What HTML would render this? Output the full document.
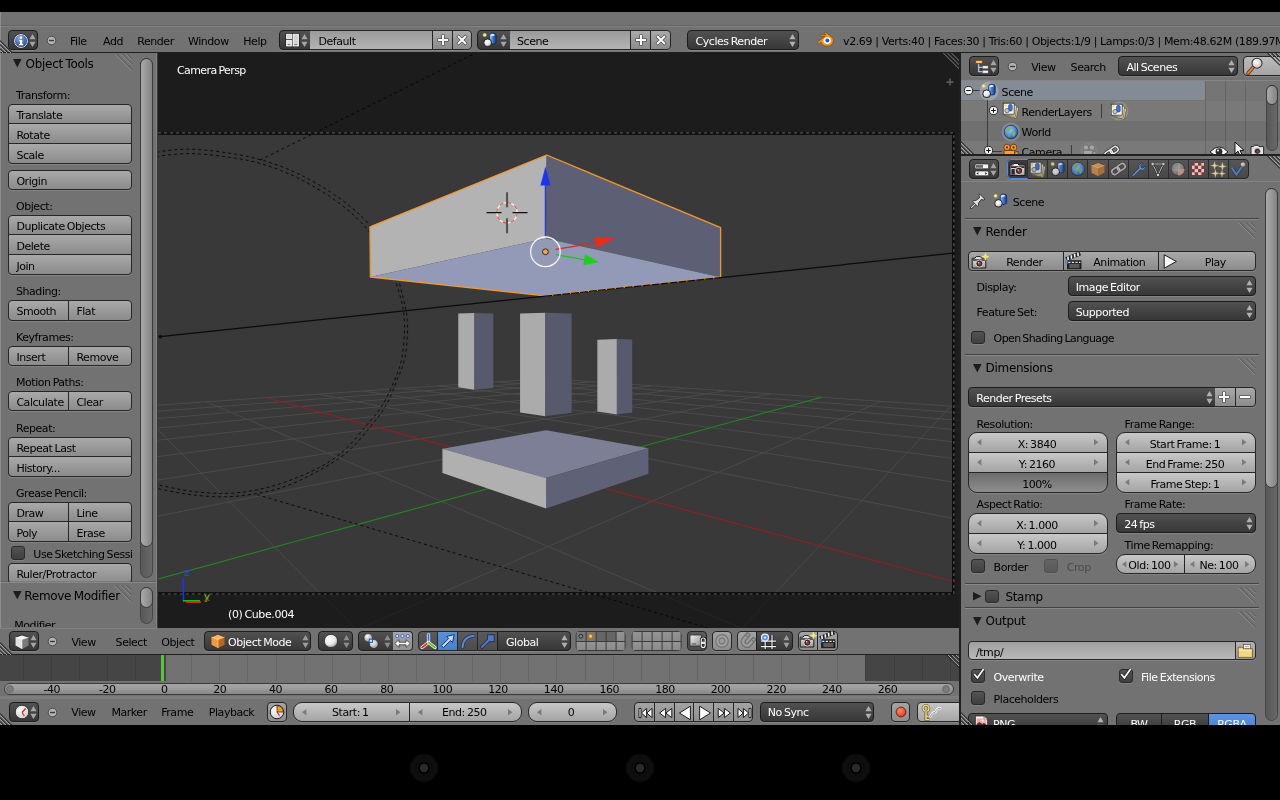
<!DOCTYPE html>
<html lang="en"><head><meta charset="utf-8"><title>Blender</title>
<style>
*{box-sizing:border-box;margin:0;padding:0}
html,body{width:1280px;height:800px;overflow:hidden;background:#000}
body{font-family:"DejaVu Sans","Liberation Sans",sans-serif;font-size:11px;letter-spacing:-0.45px;color:#000;position:relative;line-height:1;font-variant-ligatures:none}
#root{position:absolute;left:0;top:0;width:1280px;height:800px;overflow:hidden;filter:blur(.35px)}
.a{position:absolute}
.bg{background:#727272}
.t{position:absolute;white-space:nowrap;line-height:13px;height:13px;word-spacing:-1px;transform:translateY(.4px)}
.w{color:#fff}
.pt{position:absolute;white-space:nowrap;font-size:12px;line-height:14px;letter-spacing:-0.3px;word-spacing:-1px;transform:translateY(.4px)}
/* widgets */
.btn{position:absolute;height:20px;border:1px solid #262626;background:linear-gradient(#a9a9a9,#8b8b8b);box-shadow:0 1px 0 rgba(255,255,255,.13)}
.menu{position:absolute;height:20px;border:1px solid #1c1c1c;background:linear-gradient(#515151,#373737);border-radius:4px;box-shadow:0 1px 0 rgba(255,255,255,.13);color:#fff}
.num{position:absolute;height:20px;border:1px solid #262626;background:linear-gradient(#c8c8c8,#a4a4a4);box-shadow:0 1px 0 rgba(255,255,255,.13)}
.txt{position:absolute;height:20px;border:1px solid #262626;background:linear-gradient(#9a9a9a,#b4b4b4);box-shadow:0 1px 0 rgba(255,255,255,.13)}
.sld{position:absolute;height:20px;border:1px solid #262626;background:linear-gradient(#6c6c6c,#8e8e8e);box-shadow:0 1px 0 rgba(255,255,255,.13)}
.chk{position:absolute;width:13px;height:13px;border:1px solid #2a2a2a;border-radius:3px;background:linear-gradient(#535353,#3f3f3f);box-shadow:0 1px 0 rgba(255,255,255,.12)}
.r4{border-radius:4px}.rl{border-radius:4px 0 0 4px}.rr{border-radius:0 4px 4px 0}
.rt{border-radius:4px 4px 0 0}.rb{border-radius:0 0 4px 4px}.r0{border-radius:0}
.rtl{border-radius:4px 0 0 0}.rtr{border-radius:0 4px 0 0}.rbl{border-radius:0 0 0 4px}.rbr{border-radius:0 0 4px 0}
.n9{border-radius:9px}.n9t{border-radius:9px 9px 0 0}.n9b{border-radius:0 0 9px 9px}.n9l{border-radius:9px 0 0 9px}.n9r{border-radius:0 9px 9px 0}
.c{text-align:center}
.ud{position:absolute;width:7px;height:12px}
.sb{position:absolute;border:1px solid #454545;border-radius:7px;background:linear-gradient(90deg,#585858,#686868)}
.sbt{position:absolute;border:1px solid #3a3a3a;border-radius:7px;background:linear-gradient(90deg,#a8a8a8,#9c9c9c 40%,#828282)}
.hl{position:absolute;height:1px}
.vl{position:absolute;width:1px}
svg{position:absolute;overflow:visible}
</style></head>
<body>
<div id="root">
<div class="a" style="left:0px;top:12px;width:1280px;height:41px;background:#727272;"></div>
<div class="a" style="left:0px;top:26px;width:1280px;height:1px;background:rgba(255,255,255,.10);"></div>
<div class="a" style="left:0px;top:25px;width:1280px;height:1px;background:rgba(0,0,0,.10);"></div>
<div class="a" style="left:0px;top:52px;width:1280px;height:1.4px;background:#1f1f1f;"></div>
<div class="a" style="left:0px;top:53.4px;width:157px;height:575px;background:#727272;"></div>
<div class="a" style="left:0px;top:12px;width:1px;height:713px;background:rgba(255,255,255,.2);"></div>
<div class="a" style="left:156px;top:53.4px;width:1.5px;height:575px;background:rgba(255,255,255,.12);"></div>
<div class="a" style="left:0px;top:628px;width:959.5px;height:26px;background:#727272;"></div>
<div class="a" style="left:0px;top:627.5px;width:157px;height:1px;background:rgba(255,255,255,.10);"></div>
<div class="a" style="left:0px;top:654px;width:959.5px;height:1.2px;background:#1f1f1f;"></div>
<div class="a" style="left:0px;top:655px;width:959.5px;height:70px;background:#727272;"></div>
<div class="a" style="left:959.2px;top:53px;width:1.6px;height:672px;background:#1f1f1f;"></div>
<div class="a" style="left:960.8px;top:53.4px;width:320px;height:672px;background:#727272;"></div>
<div class="menu" style="left:8px;top:30px;width:30px;height:20px;"><svg style="left:4px;top:2px" width="16" height="16" viewBox="0 0 16 16"><defs><radialGradient id="gi" cx=".4" cy=".3" r=".8"><stop offset="0" stop-color="#7fa6e6"/><stop offset="1" stop-color="#1f3f86"/></radialGradient></defs><circle cx="8" cy="8" r="6.6" fill="url(#gi)" stroke="#e8eef8" stroke-width="1"/><circle cx="8" cy="8" r="7.3" fill="none" stroke="#1a2440" stroke-width=".6"/><circle cx="8" cy="4.6" r="1.3" fill="#fff"/><path d="M6.2 7H9.2V11H10.2V12.2H6V11H7V8.2H6.2Z" fill="#fff"/></svg><svg style="left:20px;top:2.6px" width="7" height="13" viewBox="0 0 7 13"><path d="M3.5 0L6.6 5.3H0.4Z M3.5 13L6.6 7.7H0.4Z" fill="#a4a4a4"/></svg></div>
<svg style="left:46px;top:35px" width="11" height="11" viewBox="0 0 11 11"><circle cx="5.5" cy="5.5" r="4.3" fill="#b4b4b4" stroke="#4a4a4a" stroke-width="1"/><path d="M3 5.5H8" stroke="#3a3a3a" stroke-width="1.4"/></svg>
<div class="t " style="left:70px;top:34.6px;">File</div>
<div class="t " style="left:103px;top:34.6px;">Add</div>
<div class="t " style="left:137.3px;top:34.6px;">Render</div>
<div class="t " style="left:188px;top:34.6px;">Window</div>
<div class="t " style="left:243.3px;top:34.6px;">Help</div>
<div class="menu rl" style="left:279px;top:30px;width:31.5px;height:20px;border-radius:4px 0 0 4px"><svg style="left:4.6px;top:1.4px" width="15" height="16" viewBox="0 0 15 16"><rect x=".5" y="1" width="14" height="14" rx="1" fill="#111"/><rect x="1.6" y="2.2" width="4.8" height="4.6" fill="#d8d8d8" stroke="#fff" stroke-width=".9"/><rect x="1.6" y="8.4" width="4.8" height="5.6" fill="#e4e4e4" stroke="#fff" stroke-width=".9"/><rect x="8" y="2.2" width="5.4" height="11.8" fill="#d4d4d4" stroke="#fff" stroke-width=".9"/><path d="M2.6 12.6H5.4M9.2 12.6H12.2" stroke="#666" stroke-width=".9"/></svg><svg style="left:21px;top:2.6px" width="7" height="13" viewBox="0 0 7 13"><path d="M3.5 0L6.6 5.3H0.4Z M3.5 13L6.6 7.7H0.4Z" fill="#a4a4a4"/></svg></div>
<div class="txt r0" style="left:309.5px;top:30px;width:123px;height:20px;border-left:0"></div>
<div class="t " style="left:318.5px;top:34.6px;">Default</div>
<div class="btn r0" style="left:431.5px;top:30px;width:21px;height:20px;"><svg style="left:3px;top:2px" width="14" height="14" viewBox="0 0 14 14"><path d="M7 1.4V12.6M1.4 7H12.6" stroke="#3c3c3c" stroke-width="3.1" stroke-linecap="butt"/><path d="M7 2V12M2 7H12" stroke="#fff" stroke-width="2"/></svg></div>
<div class="btn rr" style="left:451.5px;top:30px;width:20.5px;height:20px;"><svg style="left:2.5px;top:2px" width="14" height="14" viewBox="0 0 14 14"><path d="M2.6 2.6L11.4 11.4M11.4 2.6L2.6 11.4" stroke="#3c3c3c" stroke-width="3.1"/><path d="M3 3L11 11M11 3L3 11" stroke="#fff" stroke-width="2"/></svg></div>
<div class="menu rl" style="left:477px;top:30px;width:33.5px;height:20px;border-radius:4px 0 0 4px"><svg style="left:4.4px;top:0.8px" width="16" height="16" viewBox="0 0 16 16"><defs><radialGradient id="gs" cx=".38" cy=".32" r=".8"><stop offset="0" stop-color="#fff"/><stop offset=".55" stop-color="#e4e4e4"/><stop offset="1" stop-color="#7a7a7a"/></radialGradient><linearGradient id="gc" x1="0" x2="1"><stop offset="0" stop-color="#b8d4f8"/><stop offset=".45" stop-color="#3f7fd8"/><stop offset="1" stop-color="#143c8c"/></linearGradient><radialGradient id="gy" cx=".5" cy=".5" r=".5"><stop offset="0" stop-color="#fffff0"/><stop offset=".45" stop-color="#e8e060"/><stop offset="1" stop-color="#b0a830" stop-opacity="0"/></radialGradient></defs><rect x="7.6" y="1.1" width="6.6" height="10.8" rx="2.5" fill="url(#gc)" stroke="#0e2458" stroke-width=".8"/><path d="M8.6 3.4Q8.6 2 10.8 2Q12.6 2 12.8 3.2Q11 4.4 8.6 4.2Z" fill="#f4f8ff" fill-opacity=".9"/><circle cx="5.7" cy="10.8" r="3.9" fill="url(#gs)" stroke="#151515" stroke-width=".9"/><circle cx="2.7" cy="3" r="2.6" fill="url(#gy)"/></svg><svg style="left:21.6px;top:2.6px" width="7" height="13" viewBox="0 0 7 13"><path d="M3.5 0L6.6 5.3H0.4Z M3.5 13L6.6 7.7H0.4Z" fill="#a4a4a4"/></svg></div>
<div class="txt r0" style="left:509.5px;top:30px;width:121px;height:20px;border-left:0"></div>
<div class="t " style="left:517px;top:34.6px;">Scene</div>
<div class="btn r0" style="left:629.5px;top:30px;width:21px;height:20px;"><svg style="left:3px;top:2px" width="14" height="14" viewBox="0 0 14 14"><path d="M7 1.4V12.6M1.4 7H12.6" stroke="#3c3c3c" stroke-width="3.1" stroke-linecap="butt"/><path d="M7 2V12M2 7H12" stroke="#fff" stroke-width="2"/></svg></div>
<div class="btn rr" style="left:649.5px;top:30px;width:21px;height:20px;"><svg style="left:3px;top:2px" width="14" height="14" viewBox="0 0 14 14"><path d="M2.6 2.6L11.4 11.4M11.4 2.6L2.6 11.4" stroke="#3c3c3c" stroke-width="3.1"/><path d="M3 3L11 11M11 3L3 11" stroke="#fff" stroke-width="2"/></svg></div>
<div class="menu" style="left:687px;top:30px;width:112px;height:20px;"><svg style="left:100.5px;top:2.6px" width="7" height="13" viewBox="0 0 7 13"><path d="M3.5 0L6.6 5.3H0.4Z M3.5 13L6.6 7.7H0.4Z" fill="#b0b0b0"/></svg></div>
<div class="t w" style="left:695.5px;top:34.6px;">Cycles Render</div>
<svg style="left:817px;top:32px" width="17" height="15" viewBox="0 0 17 15"><path d="M1 9.4L8.2 4.2H4.2Q3.2 4.2 3.2 3.4Q3.2 2.6 4.2 2.6H9L7.6 1.6Q7 1 7.6 .5Q8.2 0 8.9 .5L14.6 4.8Q16.4 6.4 16.4 8.6Q16.4 11.2 14.4 12.8Q12.6 14.3 10 14.3Q7.2 14.3 5.4 12.6Q4.4 11.6 4.1 10.2L2.4 11.4Q1.6 11.9 1.1 11.2Q.5 10.2 1 9.4Z" fill="#f5921e" stroke="#7a4200" stroke-width=".6"/><ellipse cx="10.2" cy="8.6" rx="3.7" ry="3.4" fill="#fff"/><circle cx="10.4" cy="8.6" r="2" fill="#1c58b8"/></svg>
<div class="t " style="left:843px;top:34.6px;letter-spacing:-0.38px;word-spacing:0">v2.69 | Verts:40 | Faces:30 | Tris:60 | Objects:1/9 | Lamps:0/3 | Mem:48.62M (189.97M</div>
<svg style="left:0px;top:39px" width="14" height="14" viewBox="0 0 14 14"><path d="M0 1.6L12.4 14M0 5.6L8.4 14M0 9.6L4.4 14" stroke="#2e2e2e" stroke-width="1.1" fill="none"/><path d="M0 3L11 14M0 7L7 14M0 11L3 14" stroke="#a0a0a0" stroke-width="1" fill="none"/></svg>
<svg style="left:13px;top:59.2px" width="9" height="9" viewBox="0 0 9 9"><path d="M0 0H8.6L4.3 8.6Z" fill="#1c1c1c"/></svg>
<div class="pt " style="left:25.6px;top:57.2px;">Object Tools</div>
<svg style="left:114.6px;top:54.4px" width="18" height="18" viewBox="0 0 18 18"><path d="M1.4 0L17.4 16M7.4 0L17.4 10M12.4 0L17.4 5" stroke="#5a5a5a" stroke-width="1" fill="none"/><path d="M0.4 0.6L16.6 16.8M6.4 0.6L16.6 10.8M11.4 0.6L16.6 5.8" stroke="#8e8e8e" stroke-width="1" fill="none"/></svg>
<div class="t " style="left:16px;top:88.6px;">Transform:</div>
<div class="btn rt" style="left:8px;top:104px;width:124px;height:20px;"><div class="t" style="left:7.4px;top:3.6px">Translate</div></div>
<div class="btn r0" style="left:8px;top:123px;width:124px;height:21px;"><div class="t" style="left:7.4px;top:4.6px">Rotate</div></div>
<div class="btn rb" style="left:8px;top:143px;width:124px;height:21px;"><div class="t" style="left:7.4px;top:4.6px">Scale</div></div>
<div class="btn r4" style="left:8px;top:170px;width:124px;height:20px;"><div class="t" style="left:7.4px;top:3.6px">Origin</div></div>
<div class="t " style="left:16px;top:199.8px;">Object:</div>
<div class="btn rt" style="left:8px;top:215px;width:124px;height:20px;"><div class="t" style="left:7.4px;top:3.6px">Duplicate Objects</div></div>
<div class="btn r0" style="left:8px;top:234px;width:124px;height:21px;"><div class="t" style="left:7.4px;top:4.6px">Delete</div></div>
<div class="btn rb" style="left:8px;top:254px;width:124px;height:21px;"><div class="t" style="left:7.4px;top:4.6px">Join</div></div>
<div class="t " style="left:16px;top:285.4px;">Shading:</div>
<div class="btn rl" style="left:8px;top:300px;width:61px;height:21px;"><div class="t" style="left:7.4px;top:3.6px">Smooth</div></div>
<div class="btn rr" style="left:68px;top:300px;width:64px;height:21px;"><div class="t" style="left:7.4px;top:3.6px">Flat</div></div>
<div class="t " style="left:16px;top:331px;">Keyframes:</div>
<div class="btn rl" style="left:8px;top:346px;width:61px;height:20px;"><div class="t" style="left:7.4px;top:3.6px">Insert</div></div>
<div class="btn rr" style="left:68px;top:346px;width:64px;height:20px;"><div class="t" style="left:7.4px;top:3.6px">Remove</div></div>
<div class="t " style="left:16px;top:376.3px;">Motion Paths:</div>
<div class="btn rl" style="left:8px;top:391px;width:61px;height:20px;"><div class="t" style="left:7.4px;top:3.6px">Calculate</div></div>
<div class="btn rr" style="left:68px;top:391px;width:64px;height:20px;"><div class="t" style="left:7.4px;top:3.6px">Clear</div></div>
<div class="t " style="left:16px;top:421.6px;">Repeat:</div>
<div class="btn rt" style="left:8px;top:437px;width:124px;height:20px;"><div class="t" style="left:7.4px;top:3.6px">Repeat Last</div></div>
<div class="btn rb" style="left:8px;top:456px;width:124px;height:21px;"><div class="t" style="left:7.4px;top:4.6px">History...</div></div>
<div class="t " style="left:16px;top:487.3px;">Grease Pencil:</div>
<div class="btn rtl" style="left:8px;top:502px;width:61px;height:20px;"><div class="t" style="left:7.4px;top:3.6px">Draw</div></div>
<div class="btn rtr" style="left:68px;top:502px;width:64px;height:20px;"><div class="t" style="left:7.4px;top:3.6px">Line</div></div>
<div class="btn rbl" style="left:8px;top:521px;width:61px;height:21px;"><div class="t" style="left:7.4px;top:4.6px">Poly</div></div>
<div class="btn rbr" style="left:68px;top:521px;width:64px;height:21px;"><div class="t" style="left:7.4px;top:4.6px">Erase</div></div>
<div class="chk" style="left:11px;top:546px;width:14px;height:14px;"></div>
<div class="a" style="left:33px;top:547.6px;width:99px;height:14px;overflow:hidden"><div class="t " style="left:0.3px;top:0px;">Use Sketching Sessions</div></div>
<div class="a" style="left:0;top:560px;width:140px;height:21.6px;overflow:hidden"><div class="btn r4" style="left:8px;top:3px;width:124px;height:21px;"><div class="t" style="left:7.4px;top:3.6px">Ruler/Protractor</div></div></div>
<div class="sb" style="left:140px;top:58px;width:13px;height:520px;"></div>
<div class="sbt" style="left:140px;top:58px;width:13px;height:488.5px;"></div>
<div class="a" style="left:0px;top:581.6px;width:157px;height:1px;background:rgba(255,255,255,.16);"></div>
<div class="a" style="left:0px;top:580.6px;width:157px;height:1px;background:rgba(0,0,0,.12);"></div>
<svg style="left:13px;top:591px" width="9" height="9" viewBox="0 0 9 9"><path d="M0 0H8.6L4.3 8.6Z" fill="#1c1c1c"/></svg>
<div class="pt " style="left:24.3px;top:588.8px;">Remove Modifier</div>
<svg style="left:113.6px;top:584.6px" width="18" height="18" viewBox="0 0 18 18"><path d="M1.4 0L17.4 16M7.4 0L17.4 10M12.4 0L17.4 5" stroke="#5a5a5a" stroke-width="1" fill="none"/><path d="M0.4 0.6L16.6 16.8M6.4 0.6L16.6 10.8M11.4 0.6L16.6 5.8" stroke="#8e8e8e" stroke-width="1" fill="none"/></svg>
<div class="a" style="left:0;top:610px;width:140px;height:17.4px;overflow:hidden"><div class="t " style="left:14.3px;top:9.2px;">Modifier</div></div>
<div class="sb" style="left:140px;top:587px;width:13px;height:36.6px;"></div>
<div class="sbt" style="left:140px;top:587px;width:13px;height:21px;"></div>
<div class="a" style="left:157.4px;top:53.4px;width:802px;height:574.4px;background:#393939;"></div>
<svg style="left:158px;top:53.4px;overflow:hidden" width="801.2" height="574.2" viewBox="158 53.4 801.2 574.2"><rect x="150" y="50" width="820" height="590" fill="#393939"/><path d="M70462.3 10004.2L1898.9 471.0M-69767.5 10004.2L-852.3 475.2M57373.4 10004.2L1620.1 452.0M-56528.6 10004.2L-557.1 454.9M44284.6 10004.2L1415.3 438.1M-43289.7 10004.2L-342.7 440.1M31195.8 10004.2L1258.4 427.4M-30050.8 10004.2L-180.1 428.9M18107.0 10004.2L1134.4 419.0M-16811.9 10004.2L-52.4 420.1M5018.1 10004.2L1033.9 412.2M-3573.0 10004.2L50.5 413.0M-8070.7 10004.2L950.9 406.5M9665.9 10004.2L135.1 407.1M-21159.5 10004.2L881.1 401.8M22904.8 10004.2L206.0 402.2M-47337.1 10004.2L770.3 394.2M49382.6 10004.2L318.1 394.5M-60426.0 10004.2L725.6 391.2M62621.5 10004.2L363.1 391.4M-13829.0 2269.5L686.3 388.5M11227.9 1768.1L402.6 388.7M-3586.1 853.2L651.4 386.2M4312.9 806.7L437.5 386.3M-2032.9 638.5L620.4 384.0M2978.8 621.2L468.6 384.1M-1405.0 551.7L592.5 382.1M2411.9 542.3L496.5 382.2M-1065.2 504.7L567.3 380.4M2098.1 498.7L521.7 380.4M-852.3 475.2L544.5 378.9M1898.9 471.0L544.5 378.9" stroke="#4b4b4b" stroke-width="1" fill="none"/><path d="M36143.7 10004.2L266.3 398.1" stroke="#8c2222" stroke-width="1.1"/><path d="M-34248.3 10004.2L821.6 397.7" stroke="#1f8a1f" stroke-width="1.1"/><path d="M140.0 160.0C143.0 158.8 150.2 154.2 158.0 152.5C165.8 150.8 176.3 149.6 187.0 149.6C197.7 149.6 209.8 150.8 222.0 152.5C234.2 154.2 247.0 156.2 260.0 160.0C273.0 163.8 286.7 168.5 300.0 175.0C313.3 181.5 328.3 190.5 340.0 199.0C351.7 207.5 361.3 215.5 370.0 226.0C378.7 236.5 386.4 249.7 392.0 262.0C397.6 274.3 400.9 289.5 403.5 300.0C406.1 310.5 407.2 315.4 407.5 325.0C407.8 334.6 406.9 347.9 405.0 357.5C403.1 367.1 399.5 374.2 396.2 382.5C392.9 390.8 389.4 400.0 385.0 407.5C380.6 415.0 375.8 420.4 370.0 427.5C364.2 434.6 357.5 443.3 350.0 450.0C342.5 456.7 335.0 461.7 325.0 467.5C315.0 473.3 301.2 480.6 290.0 485.0C278.8 489.4 268.3 491.8 257.5 493.8C246.7 495.8 236.2 497.0 225.0 497.2C213.8 497.4 201.3 496.4 190.0 495.0C178.7 493.6 165.3 490.6 157.0 488.8C148.7 487.0 142.8 484.8 140.0 484.0" stroke="#0a0a0a" stroke-width="1" fill="none" stroke-dasharray="3 3"/><path d="M140.0 165.0C143.0 163.7 149.7 158.8 158.0 157.0C166.3 155.2 179.0 154.0 190.0 154.0C201.0 154.0 212.3 155.4 224.0 157.0C235.7 158.6 247.7 160.2 260.0 163.8C272.3 167.4 285.2 172.1 298.0 178.5C310.8 184.9 325.4 193.4 337.0 202.0C348.6 210.6 358.8 219.5 367.5 230.0C376.2 240.5 383.4 253.3 389.0 265.0C394.6 276.7 398.4 290.0 401.0 300.0C403.6 310.0 404.3 315.4 404.5 325.0C404.7 334.6 403.8 347.9 402.0 357.5C400.2 367.1 397.2 374.2 393.7 382.5C390.2 390.8 386.0 400.0 381.2 407.5C376.4 415.0 371.0 420.4 365.0 427.5C359.0 434.6 352.5 443.3 345.0 450.0C337.5 456.7 330.0 462.1 320.0 467.5C310.0 472.9 295.8 478.7 285.0 482.5C274.2 486.3 265.0 488.6 255.0 490.5C245.0 492.4 235.8 493.6 225.0 493.8C214.2 494.0 201.3 493.0 190.0 491.5C178.7 490.0 165.3 486.9 157.0 485.0C148.7 483.1 142.8 480.8 140.0 480.0" stroke="#0a0a0a" stroke-width="1" fill="none" stroke-dasharray="3 3"/><path d="M260 160.5L476 53" stroke="#0a0a0a" stroke-width="1" fill="none" stroke-dasharray="3 3"/><path d="M257 495L708 628.5" stroke="#0a0a0a" stroke-width="1" fill="none" stroke-dasharray="3 3"/><rect x="158.6" y="335.6" width="3" height="3" fill="#0a0a0a"/><polygon points="458.2,313.8 474.4,313.4 474.4,390.2 458.2,387.6" fill="#ababab" /><polygon points="474.4,313.4 493.3,313.8 493.3,388.4 474.4,390.2" fill="#57596c" /><polygon points="597.3,340.2 616.9,339.4 616.9,415.0 597.3,412.0" fill="#ababab" /><polygon points="616.9,339.4 632.2,340.0 632.2,413.0 616.9,415.0" fill="#57596c" /><polygon points="520.0,314.0 545.3,313.2 545.3,416.6 520.0,413.0" fill="#ababab" /><polygon points="545.3,313.2 571.6,313.8 571.6,413.2 545.3,416.6" fill="#57596c" /><polygon points="546.0,430.6 648.4,448.6 546.0,478.4 442.4,449.2" fill="#7c7f95" /><polygon points="442.4,449.2 546.0,478.4 546.0,508.8 442.4,473.4" fill="#b0b0b0" /><polygon points="546.0,478.4 648.4,448.6 648.4,474.2 546.0,508.8" fill="#5f6176" /><polygon points="546.6,155.4 369.9,227.2 370.4,277.4 546.0,238.8" fill="#b3b3b3" /><polygon points="546.6,155.4 720.6,228.0 720.6,277.6 546.0,238.8" fill="#5d5f74" /><polygon points="546.0,238.8 370.4,277.4 545.0,296.2 720.6,277.6" fill="#929ab7" /><polygon points="546.6,155.4 369.9,227.2 370.4,277.4 545.0,296.2 720.6,277.6 720.6,228.0" fill="none" stroke="#f39a2c" stroke-width="1.3" stroke-linejoin="round"/><path d="M160 337L952.8 253.6" stroke="#0c0c0c" stroke-width="1.25"/><path d="M552 295.6L720 277.7" stroke="#e89a3c" stroke-width="1.2" stroke-dasharray="1.2 7.8"/><circle cx="507" cy="213.1" r="10.2" fill="none" stroke="#f4f4f4" stroke-width="1.2"/><circle cx="507" cy="213.1" r="10.2" fill="none" stroke="#e4503c" stroke-width="1.2" stroke-dasharray="4 4"/><path d="M486.5 213.1h15M512.5 213.1h15M507 192.6v15M507 218.6v15" stroke="#101010" stroke-width="1.2"/><path d="M545.4 237.2V185.5" stroke="#2038e0" stroke-width="1.3"/><path d="M545.4 166.8L550.4 186H540.4Z" fill="#1c34f0"/><path d="M555.4 249.8L597 243" stroke="#e02818" stroke-width="1.3"/><path d="M615.4 238.6L596.4 248.2L594.8 237.2Z" fill="#f02a14"/><path d="M556 255L585 260.2" stroke="#18c818" stroke-width="1.3"/><path d="M598.6 262.4L583.4 265.6L585 254.6Z" fill="#14d414"/><circle cx="545.4" cy="252.2" r="14.8" fill="none" stroke="#f6f6f6" stroke-width="1.3"/><circle cx="545.4" cy="252.2" r="2.9" fill="#f6a850" stroke="#2a1a08" stroke-width=".9"/><rect x="150" y="50" width="820" height="83.4" fill="#000" fill-opacity=".5"/><rect x="150" y="594.3" width="820" height="60" fill="#000" fill-opacity=".5"/><rect x="953.7" y="133.4" width="30" height="460.9" fill="#000" fill-opacity=".5"/><path d="M150 134.5H952.7V593.3H150" fill="none" stroke="#050505" stroke-width="1.1"/><path d="M150 133.4H953.7V594.3H150" fill="none" stroke="#050505" stroke-width="1.2"/><path d="M152 133.3H953.8V594.4H150" fill="none" stroke="#666" stroke-width="1" stroke-dasharray="3 3"/><path d="M943 53L959.5 69.5M947 53L959.5 65.5M951 53L959.5 61.5" stroke="#8a8a8a" stroke-width="1"/><path d="M946.5 82.5h7M950 79v7" stroke="#5c5c5c" stroke-width="1.6"/><path d="M183.4 602.2V578" stroke="#1c34f0" stroke-width="1.6"/><path d="M186 602.6H201" stroke="#f02a14" stroke-width="1.4"/><path d="M183 601.2H200" stroke="#14d414" stroke-width="1.4"/><text x="184.6" y="576" font-size="10.5" fill="#2a44f4" font-family="DejaVu Sans, Liberation Sans, sans-serif">z</text><text x="203.4" y="601.4" font-size="10.5" fill="#e0301c" font-family="DejaVu Sans, Liberation Sans, sans-serif">x</text><text x="204" y="600.4" font-size="10.5" fill="#22c822" font-family="DejaVu Sans, Liberation Sans, sans-serif">y</text></svg>
<div class="t w" style="left:177px;top:64px;letter-spacing:-0.6px">Camera Persp</div>
<div class="t w" style="left:228px;top:607.8px;letter-spacing:-0.4px">(0) Cube.004</div>
<svg style="left:0px;top:641px" width="14" height="14" viewBox="0 0 14 14"><path d="M0 1.6L12.4 14M0 5.6L8.4 14M0 9.6L4.4 14" stroke="#2e2e2e" stroke-width="1.1" fill="none"/><path d="M0 3L11 14M0 7L7 14M0 11L3 14" stroke="#a0a0a0" stroke-width="1" fill="none"/></svg>
<div class="menu" style="left:9.4px;top:631px;width:30px;height:20px;"><svg style="left:3.4px;top:1.5px" width="16" height="16" viewBox="0 0 16 16"><path d="M1.5 3.2L8 1L14.5 3.2V11.6L8 15L1.5 11.6Z" fill="#f2f2f2" stroke="#222" stroke-width=".8"/><path d="M8 5.6L14.5 3.2V11.6L8 15Z" fill="#7a7a7a"/><path d="M1.5 3.2L8 5.6V15L1.5 11.6Z" fill="#e2e2e2"/><path d="M1.5 3.2L8 5.6L14.5 3.2M8 5.6V15" stroke="#fff" stroke-width=".5" fill="none"/></svg><svg style="left:20px;top:2.6px" width="7" height="13" viewBox="0 0 7 13"><path d="M3.5 0L6.6 5.3H0.4Z M3.5 13L6.6 7.7H0.4Z" fill="#a4a4a4"/></svg></div>
<svg style="left:47px;top:636.4px" width="11" height="11" viewBox="0 0 11 11"><circle cx="5.5" cy="5.5" r="4.3" fill="#b4b4b4" stroke="#4a4a4a" stroke-width="1"/><path d="M3 5.5H8" stroke="#3a3a3a" stroke-width="1.4"/></svg>
<div class="t " style="left:71.4px;top:635.6px;">View</div>
<div class="t " style="left:115.6px;top:635.6px;">Select</div>
<div class="t " style="left:161.3px;top:635.6px;">Object</div>
<div class="menu" style="left:204px;top:631px;width:107.4px;height:20px;"><svg style="left:4.6px;top:1.2px" width="16" height="16" viewBox="0 0 16 16"><path d="M1.5 4L8 1.2L14.5 4V11.8L8 15L1.5 11.8Z" fill="#f6b868" stroke="#5a3008" stroke-width=".8"/><path d="M8 6.6L14.5 4V11.8L8 15Z" fill="#b86a18"/><path d="M1.5 4L8 6.6V15L1.5 11.8Z" fill="#ee9a3c"/><path d="M1.5 4L8 6.6L14.5 4M8 6.6V15" stroke="#ffe0b0" stroke-width=".6" fill="none"/></svg><svg style="left:96.6px;top:3.2px" width="7" height="13" viewBox="0 0 7 13"><path d="M3.5 0L6.6 5.3H0.4Z M3.5 13L6.6 7.7H0.4Z" fill="#9c9c9c"/></svg></div>
<div class="t w" style="left:228px;top:635.6px;">Object Mode</div>
<div class="menu" style="left:317.6px;top:631px;width:35px;height:20px;"><svg style="left:4.4px;top:1.2px" width="16" height="16" viewBox="0 0 16 16"><defs><radialGradient id="gso" cx=".38" cy=".32" r=".75"><stop offset="0" stop-color="#fff"/><stop offset=".6" stop-color="#e8e8e8"/><stop offset="1" stop-color="#8c8c8c"/></radialGradient></defs><circle cx="8" cy="8" r="6.6" fill="url(#gso)" stroke="#222" stroke-width=".7"/></svg><svg style="left:24.2px;top:3.2px" width="7" height="13" viewBox="0 0 7 13"><path d="M3.5 0L6.6 5.3H0.4Z M3.5 13L6.6 7.7H0.4Z" fill="#8c8c8c"/></svg></div>
<div class="menu" style="left:357.6px;top:631px;width:36.4px;height:20px;border-radius:4px 0 0 4px"><svg style="left:4.4px;top:1.2px" width="16" height="16" viewBox="0 0 16 16"><defs><radialGradient id="gpv" cx=".38" cy=".32" r=".75"><stop offset="0" stop-color="#fff"/><stop offset="1" stop-color="#909090"/></radialGradient></defs><circle cx="5.2" cy="4.8" r="4.2" fill="url(#gpv)" stroke="#222" stroke-width=".6"/><circle cx="10.8" cy="11" r="4.4" fill="url(#gpv)" stroke="#222" stroke-width=".6"/><rect x="6.3" y="6.2" width="3.2" height="3.2" fill="#dfeaff" stroke="#1d5fd0" stroke-width="1.1"/></svg><svg style="left:25.4px;top:3.2px" width="7" height="13" viewBox="0 0 7 13"><path d="M3.5 0L6.6 5.3H0.4Z M3.5 13L6.6 7.7H0.4Z" fill="#8c8c8c"/></svg></div>
<div class="btn" style="left:393px;top:631px;width:19.8px;height:20px;border-radius:0 4px 4px 0;border-left:0;background:linear-gradient(#a6a6a6,#929292)"><svg style="left:0.6px;top:1px" width="17" height="16" viewBox="0 0 17 16"><g fill="#e8f0ff" stroke="#2a62c8" stroke-width=".9"><circle cx="3.2" cy="3" r="1.6"/><circle cx="8.5" cy="3" r="1.6"/><circle cx="13.8" cy="3" r="1.6"/></g><path d="M.8 10.5L5 6.6V9.2H12V6.6L16.2 10.5L12 14.4V11.8H5V14.4Z" fill="#fff" stroke="#333" stroke-width=".8"/></svg></div>
<div class="btn" style="left:418.4px;top:631px;width:20px;height:20px;border-radius:4px 0 0 4px;background:linear-gradient(#5b5b5b,#4c4c4c);"><svg style="left:0.6px;top:0.6px" width="17" height="17" viewBox="0 0 17 17"><path d="M8.5 9.5V1.5" stroke="#fff" stroke-width="3.2" stroke-linecap="round"/><path d="M8.5 9.5V1.5" stroke="#2f62e8" stroke-width="1.8" stroke-linecap="round"/><path d="M8.5 9.5L2 14.5" stroke="#fff" stroke-width="3.2" stroke-linecap="round"/><path d="M8.5 9.5L2 14.5" stroke="#e03020" stroke-width="1.8" stroke-linecap="round"/><path d="M8.5 9.5L15 14.5" stroke="#fff" stroke-width="3.2" stroke-linecap="round"/><path d="M8.5 9.5L15 14.5" stroke="#58c020" stroke-width="1.8" stroke-linecap="round"/></svg></div>
<div class="btn" style="left:437.4px;top:631px;width:20.6px;height:20px;border-radius:0;background:linear-gradient(#5a92d8,#4a7fc6);"><svg style="left:1.2px;top:1px" width="16" height="16" viewBox="0 0 16 16"><path d="M14.2 1.6L12.6 9.4L10.6 7.6L3.4 14.6L1.4 12.6L8.6 5.6L6.6 3.4Z" fill="#bcd8ff" stroke="#16366e" stroke-width="1"/></svg></div>
<div class="btn" style="left:457px;top:631px;width:21px;height:20px;border-radius:0;background:linear-gradient(#5b5b5b,#4c4c4c);"><svg style="left:1.6px;top:1px" width="16" height="16" viewBox="0 0 16 16"><path d="M2.5 14.5Q3 4 13.8 2.8" fill="none" stroke="#1c2e50" stroke-width="3.4" stroke-linecap="round"/><path d="M2.5 14.5Q3 4 13.8 2.8" fill="none" stroke="#5e8ac8" stroke-width="2" stroke-linecap="round"/></svg></div>
<div class="btn" style="left:477px;top:631px;width:21.4px;height:20px;border-radius:0;background:linear-gradient(#5b5b5b,#4c4c4c);"><svg style="left:1.8px;top:1px" width="16" height="16" viewBox="0 0 16 16"><path d="M2 14L9 7" stroke="#1c2e50" stroke-width="3.6" stroke-linecap="round"/><rect x="7.4" y="1.8" width="6.8" height="6.8" fill="#4e7cc0" stroke="#1c2e50" stroke-width=".9"/><path d="M2 14L9 7" stroke="#4e7cc0" stroke-width="2" stroke-linecap="round"/></svg></div>
<div class="menu" style="left:497.4px;top:631px;width:73.4px;height:20px;border-radius:0 4px 4px 0;"><svg style="left:63px;top:3.2px" width="7" height="13" viewBox="0 0 7 13"><path d="M3.5 0L6.6 5.3H0.4Z M3.5 13L6.6 7.7H0.4Z" fill="#b0b0b0"/></svg></div>
<div class="t w" style="left:506px;top:635.6px;">Global</div>
<div class="a" style="left:576px;top:631px;width:50px;height:20px;border-radius:4.5px;overflow:hidden;background:#3a3a3a;transform:translateX(-.4px)"><div class="a" style="left:1px;top:1px;width:9px;height:8.5px;background:#787878"></div><div class="a" style="left:11px;top:1px;width:9px;height:8.5px;background:#787878"></div><div class="a" style="left:21px;top:1px;width:9px;height:8.5px;background:#666"></div><div class="a" style="left:31px;top:1px;width:9px;height:8.5px;background:#666"></div><div class="a" style="left:41px;top:1px;width:8px;height:8.5px;background:linear-gradient(#949494,#8a8a8a)"></div><div class="a" style="left:1px;top:10.5px;width:9px;height:8.5px;background:linear-gradient(#949494,#8a8a8a)"></div><div class="a" style="left:11px;top:10.5px;width:9px;height:8.5px;background:linear-gradient(#949494,#8a8a8a)"></div><div class="a" style="left:21px;top:10.5px;width:9px;height:8.5px;background:linear-gradient(#949494,#8a8a8a)"></div><div class="a" style="left:31px;top:10.5px;width:9px;height:8.5px;background:linear-gradient(#949494,#8a8a8a)"></div><div class="a" style="left:41px;top:10.5px;width:8px;height:8.5px;background:linear-gradient(#949494,#8a8a8a)"></div><svg style="left:0;top:0" width="50" height="20"><circle cx="5.2" cy="5.2" r="2" fill="#7e7e7e" stroke="#2a2a2a" stroke-width="1"/><circle cx="15" cy="5.2" r="2.2" fill="#ffc070" stroke="#c86a08" stroke-width="1.1"/></svg></div>
<div class="a" style="left:631.6px;top:631px;width:50px;height:20px;border-radius:4.5px;overflow:hidden;background:#3a3a3a;transform:translateX(-.4px)"><div class="a" style="left:1px;top:1px;width:9px;height:8.5px;background:linear-gradient(#949494,#8a8a8a)"></div><div class="a" style="left:11px;top:1px;width:9px;height:8.5px;background:linear-gradient(#949494,#8a8a8a)"></div><div class="a" style="left:21px;top:1px;width:9px;height:8.5px;background:linear-gradient(#949494,#8a8a8a)"></div><div class="a" style="left:31px;top:1px;width:9px;height:8.5px;background:linear-gradient(#949494,#8a8a8a)"></div><div class="a" style="left:41px;top:1px;width:8px;height:8.5px;background:linear-gradient(#949494,#8a8a8a)"></div><div class="a" style="left:1px;top:10.5px;width:9px;height:8.5px;background:linear-gradient(#949494,#8a8a8a)"></div><div class="a" style="left:11px;top:10.5px;width:9px;height:8.5px;background:linear-gradient(#949494,#8a8a8a)"></div><div class="a" style="left:21px;top:10.5px;width:9px;height:8.5px;background:linear-gradient(#949494,#8a8a8a)"></div><div class="a" style="left:31px;top:10.5px;width:9px;height:8.5px;background:linear-gradient(#949494,#8a8a8a)"></div><div class="a" style="left:41px;top:10.5px;width:8px;height:8.5px;background:linear-gradient(#949494,#8a8a8a)"></div></div>
<div class="btn r4" style="left:687.4px;top:631px;width:20px;height:20px;background:linear-gradient(#5b5b5b,#4c4c4c);"><svg style="left:0.2px;top:1.2px" width="18" height="16" viewBox="0 0 18 16"><defs><linearGradient id="gll" x1="0" x2="1" y1="0" y2="1"><stop offset="0" stop-color="#f4f4f4"/><stop offset="1" stop-color="#8a8a8a"/></linearGradient></defs><rect x="1" y="2" width="11.5" height="11" fill="url(#gll)" stroke="#2a2a2a" stroke-width=".8"/><path d="M2.6 11H7" stroke="#444" stroke-width=".9"/><rect x="12.2" y="5" width="4" height="5.4" rx="2" fill="none" stroke="#1a1a1a" stroke-width="2.6"/><rect x="12.2" y="9.2" width="4" height="5.4" rx="2" fill="none" stroke="#1a1a1a" stroke-width="2.6"/><rect x="12.2" y="5" width="4" height="5.4" rx="2" fill="none" stroke="#f0f0f0" stroke-width="1.2"/><rect x="12.2" y="9.2" width="4" height="5.4" rx="2" fill="none" stroke="#f0f0f0" stroke-width="1.2"/></svg></div>
<div class="btn r4" style="left:712.4px;top:631px;width:19.6px;height:20px;background:linear-gradient(#a4a4a4,#8e8e8e)"><svg style="left:0.8px;top:1px" width="16" height="16" viewBox="0 0 16 16"><circle cx="8" cy="8" r="6.2" fill="#a6a6a6" stroke="#787878" stroke-width="1.4"/><circle cx="8" cy="8" r="3" fill="#9a9a9a" stroke="#7c7c7c" stroke-width="1.4"/></svg></div>
<div class="btn rl" style="left:737.4px;top:631px;width:19.6px;height:20px;background:linear-gradient(#a4a4a4,#8e8e8e)"><svg style="left:0.4px;top:1px" width="17" height="16" viewBox="0 0 17 16"><g transform="rotate(40 8.5 8)"><path d="M3 1.5V9Q3 14.5 8.5 14.5Q14 14.5 14 9V1.5H10.4V9Q10.4 11 8.5 11Q6.6 11 6.6 9V1.5Z" fill="#9e9e9e" stroke="#6e6e6e" stroke-width="1.2"/><path d="M3 4.4H6.6M10.4 4.4H14" stroke="#6e6e6e" stroke-width="1"/></g></svg></div>
<div class="menu" style="left:756px;top:631px;width:37px;height:20px;border-radius:0 4px 4px 0"><svg style="left:3px;top:0.6px" width="17" height="17" viewBox="0 0 17 17"><path d="M5.2 4V16M12 2V16M1 8.2H16M1 13.6H16" stroke="#1a1a1a" stroke-width="2.6"/><path d="M5.2 4V16M12 2V16M1 8.2H16M1 13.6H16" stroke="#f4f4f4" stroke-width="1.2"/><circle cx="5" cy="4.6" r="3.5" fill="#4f8ff0" stroke="#e4eeff" stroke-width="1.2"/><circle cx="5" cy="4.6" r="1.2" fill="#e8f2ff"/></svg><svg style="left:26px;top:3.2px" width="7" height="13" viewBox="0 0 7 13"><path d="M3.5 0L6.6 5.3H0.4Z M3.5 13L6.6 7.7H0.4Z" fill="#9c9c9c"/></svg></div>
<div class="btn rl" style="left:798px;top:631px;width:20.4px;height:20px;background:linear-gradient(#a4a4a4,#8e8e8e)"><svg style="left:0.4px;top:0.2px" width="18" height="17" viewBox="0 0 18 17"><defs><linearGradient id="gcam" x1="0" x2="0" y1="0" y2="1"><stop offset="0" stop-color="#f0f0f0"/><stop offset="1" stop-color="#9a9a9a"/></linearGradient></defs><path d="M1.2 5.2H4L5.2 3.6H9.4L10.6 5.2H14.8V15H1.2Z" fill="url(#gcam)" stroke="#1c1c1c" stroke-width="1"/><rect x="1.8" y="6.2" width="12.4" height="1.6" fill="#3c3c3c"/><circle cx="8.4" cy="10.6" r="3.5" fill="#2c2c2c" stroke="#d8d8d8" stroke-width=".9"/><circle cx="8.6" cy="10.8" r="1.7" fill="#b03030"/><circle cx="7.6" cy="9.8" r=".8" fill="#f0d0d0"/><path d="M14.4 .2L15.4 2.8L17.9 3.7L15.4 4.7L14.4 7.3L13.4 4.7L10.9 3.7L13.4 2.8Z" fill="#ffe050" stroke="#f8f0a0" stroke-width=".5"/></svg></div>
<div class="btn rr" style="left:817.4px;top:631px;width:20.4px;height:20px;background:linear-gradient(#a4a4a4,#8e8e8e)"><svg style="left:0.2px;top:0.4px" width="18" height="17" viewBox="0 0 18 17"><g transform="rotate(-22 2.5 7.5)"><rect x="2" y="4" width="14.6" height="3.4" fill="#1c1c1c" stroke="#111" stroke-width=".6"/><path d="M4.4 4L3.2 7.4M8 4L6.8 7.4M11.6 4L10.4 7.4M15.2 4L14 7.4" stroke="#f4f4f4" stroke-width="1.7"/></g><rect x="2.6" y="7.8" width="13.4" height="8" fill="#262626" stroke="#111" stroke-width=".8"/><path d="M3.2 9.4H15.4" stroke="#e8e8e8" stroke-width="1.4" stroke-dasharray="2.2 1.4"/><path d="M4.4 12H14.4M4.4 14H14.4" stroke="#9a9a9a" stroke-width=".9"/><path d="M1 7.6Q1.8 5 2.6 7.6V10.6Q1.8 11.6 1 10.6Z" fill="#68a8f0" stroke="#1c4c9c" stroke-width=".5"/></svg></div>
<div class="a" style="left:0px;top:655.2px;width:959.4px;height:26px;background:#454545;"></div>
<div class="a" style="left:165.609px;top:655.2px;width:699.441px;height:26px;background:#727272;"></div>
<div class="a" style="left:23px;top:655.2px;width:1px;height:26px;background:rgba(0,0,0,.11);"></div>
<div class="a" style="left:51px;top:655.2px;width:1px;height:26px;background:rgba(0,0,0,.11);"></div>
<div class="a" style="left:79px;top:655.2px;width:1px;height:26px;background:rgba(0,0,0,.11);"></div>
<div class="a" style="left:107px;top:655.2px;width:1px;height:26px;background:rgba(0,0,0,.11);"></div>
<div class="a" style="left:135px;top:655.2px;width:1px;height:26px;background:rgba(0,0,0,.11);"></div>
<div class="a" style="left:163px;top:655.2px;width:1px;height:26px;background:rgba(0,0,0,.11);"></div>
<div class="a" style="left:191px;top:655.2px;width:1px;height:26px;background:rgba(0,0,0,.11);"></div>
<div class="a" style="left:219px;top:655.2px;width:1px;height:26px;background:rgba(0,0,0,.11);"></div>
<div class="a" style="left:247px;top:655.2px;width:1px;height:26px;background:rgba(0,0,0,.11);"></div>
<div class="a" style="left:276px;top:655.2px;width:1px;height:26px;background:rgba(0,0,0,.11);"></div>
<div class="a" style="left:304px;top:655.2px;width:1px;height:26px;background:rgba(0,0,0,.11);"></div>
<div class="a" style="left:332px;top:655.2px;width:1px;height:26px;background:rgba(0,0,0,.11);"></div>
<div class="a" style="left:360px;top:655.2px;width:1px;height:26px;background:rgba(0,0,0,.11);"></div>
<div class="a" style="left:388px;top:655.2px;width:1px;height:26px;background:rgba(0,0,0,.11);"></div>
<div class="a" style="left:416px;top:655.2px;width:1px;height:26px;background:rgba(0,0,0,.11);"></div>
<div class="a" style="left:444px;top:655.2px;width:1px;height:26px;background:rgba(0,0,0,.11);"></div>
<div class="a" style="left:472px;top:655.2px;width:1px;height:26px;background:rgba(0,0,0,.11);"></div>
<div class="a" style="left:500px;top:655.2px;width:1px;height:26px;background:rgba(0,0,0,.11);"></div>
<div class="a" style="left:528px;top:655.2px;width:1px;height:26px;background:rgba(0,0,0,.11);"></div>
<div class="a" style="left:556px;top:655.2px;width:1px;height:26px;background:rgba(0,0,0,.11);"></div>
<div class="a" style="left:585px;top:655.2px;width:1px;height:26px;background:rgba(0,0,0,.11);"></div>
<div class="a" style="left:613px;top:655.2px;width:1px;height:26px;background:rgba(0,0,0,.11);"></div>
<div class="a" style="left:641px;top:655.2px;width:1px;height:26px;background:rgba(0,0,0,.11);"></div>
<div class="a" style="left:669px;top:655.2px;width:1px;height:26px;background:rgba(0,0,0,.11);"></div>
<div class="a" style="left:697px;top:655.2px;width:1px;height:26px;background:rgba(0,0,0,.11);"></div>
<div class="a" style="left:725px;top:655.2px;width:1px;height:26px;background:rgba(0,0,0,.11);"></div>
<div class="a" style="left:753px;top:655.2px;width:1px;height:26px;background:rgba(0,0,0,.11);"></div>
<div class="a" style="left:781px;top:655.2px;width:1px;height:26px;background:rgba(0,0,0,.11);"></div>
<div class="a" style="left:809px;top:655.2px;width:1px;height:26px;background:rgba(0,0,0,.11);"></div>
<div class="a" style="left:837px;top:655.2px;width:1px;height:26px;background:rgba(0,0,0,.11);"></div>
<div class="a" style="left:865px;top:655.2px;width:1px;height:26px;background:rgba(0,0,0,.11);"></div>
<div class="a" style="left:894px;top:655.2px;width:1px;height:26px;background:rgba(0,0,0,.11);"></div>
<div class="a" style="left:922px;top:655.2px;width:1px;height:26px;background:rgba(0,0,0,.11);"></div>
<div class="a" style="left:950px;top:655.2px;width:1px;height:26px;background:rgba(0,0,0,.11);"></div>
<div class="a" style="left:161px;top:655.2px;width:3.4px;height:26px;background:#56c838;"></div>
<svg style="left:945.4px;top:655.2px" width="14" height="14" viewBox="0 0 14 14"><path d="M1.6 0L14 12.4M5.6 0L14 8.4M9.6 0L14 4.4" stroke="#2e2e2e" stroke-width="1.1" fill="none"/><path d="M3 0L14 11M7 0L14 7M11 0L14 3" stroke="#a0a0a0" stroke-width="1" fill="none"/></svg>
<div class="a" style="left:4px;top:683px;width:949.8px;height:12.4px;border:1px solid #3c3c3c;border-radius:6.5px;background:linear-gradient(#a4a4a4,#9e9e9e 40%,#868686)"></div>
<svg style="left:5.4px;top:684px" width="10" height="10"><circle cx="5" cy="5" r="3.4" fill="#7c7c7c" stroke="#6a6a6a" stroke-width="1"/></svg>
<svg style="left:941px;top:684px" width="10" height="10"><circle cx="5" cy="5" r="3.4" fill="#7c7c7c" stroke="#6a6a6a" stroke-width="1"/></svg>
<div class="t c" style="left:31.72px;top:683.2px;width:40px">-40</div>
<div class="t c" style="left:87.36px;top:683.2px;width:40px">-20</div>
<div class="t c" style="left:144.2px;top:683.2px;width:40px">0</div>
<div class="t c" style="left:199.84px;top:683.2px;width:40px">20</div>
<div class="t c" style="left:255.48px;top:683.2px;width:40px">40</div>
<div class="t c" style="left:311.12px;top:683.2px;width:40px">60</div>
<div class="t c" style="left:366.76px;top:683.2px;width:40px">80</div>
<div class="t c" style="left:422.4px;top:683.2px;width:40px">100</div>
<div class="t c" style="left:478.04px;top:683.2px;width:40px">120</div>
<div class="t c" style="left:533.68px;top:683.2px;width:40px">140</div>
<div class="t c" style="left:589.32px;top:683.2px;width:40px">160</div>
<div class="t c" style="left:644.96px;top:683.2px;width:40px">180</div>
<div class="t c" style="left:700.6px;top:683.2px;width:40px">200</div>
<div class="t c" style="left:756.24px;top:683.2px;width:40px">220</div>
<div class="t c" style="left:811.88px;top:683.2px;width:40px">240</div>
<div class="t c" style="left:867.52px;top:683.2px;width:40px">260</div>
<div class="a" style="left:0px;top:696.2px;width:959.4px;height:2.6px;background:rgba(255,255,255,.08);"></div>
<svg style="left:0px;top:711.6px" width="14" height="14" viewBox="0 0 14 14"><path d="M0 1.6L12.4 14M0 5.6L8.4 14M0 9.6L4.4 14" stroke="#2e2e2e" stroke-width="1.1" fill="none"/><path d="M0 3L11 14M0 7L7 14M0 11L3 14" stroke="#a0a0a0" stroke-width="1" fill="none"/></svg>
<div class="menu" style="left:9.4px;top:702px;width:30px;height:20px;"><svg style="left:3.4px;top:1.4px" width="16" height="16" viewBox="0 0 16 16"><defs><radialGradient id="gtm" cx=".4" cy=".35" r=".8"><stop offset="0" stop-color="#fff"/><stop offset="1" stop-color="#c4c4c4"/></radialGradient></defs><circle cx="8" cy="8" r="6.8" fill="url(#gtm)" stroke="#2a2a2a" stroke-width=".9"/><path d="M8 8.4L11.6 4.6" stroke="#d82818" stroke-width="1.4"/><path d="M8 8.4L10.4 12" stroke="#d82818" stroke-width="1.1"/></svg><svg style="left:20px;top:2.6px" width="7" height="13" viewBox="0 0 7 13"><path d="M3.5 0L6.6 5.3H0.4Z M3.5 13L6.6 7.7H0.4Z" fill="#a4a4a4"/></svg></div>
<svg style="left:47px;top:707.2px" width="11" height="11" viewBox="0 0 11 11"><circle cx="5.5" cy="5.5" r="4.3" fill="#b4b4b4" stroke="#4a4a4a" stroke-width="1"/><path d="M3 5.5H8" stroke="#3a3a3a" stroke-width="1.4"/></svg>
<div class="t " style="left:71.3px;top:706.4px;">View</div>
<div class="t " style="left:111.4px;top:706.4px;">Marker</div>
<div class="t " style="left:161.2px;top:706.4px;">Frame</div>
<div class="t " style="left:208.8px;top:706.4px;">Playback</div>
<div class="btn r4" style="left:267.4px;top:702px;width:19.4px;height:19.6px;background:linear-gradient(#a4a4a4,#8e8e8e)"><svg style="left:0.8px;top:0.8px" width="16" height="16" viewBox="0 0 16 16"><defs><radialGradient id="grg" cx=".4" cy=".35" r=".8"><stop offset="0" stop-color="#fff"/><stop offset="1" stop-color="#c4c4c4"/></radialGradient></defs><circle cx="8" cy="8" r="6.8" fill="url(#grg)" stroke="#1c1c1c" stroke-width="1"/><path d="M8 8V1.6A6.4 6.4 0 0 1 14.4 8Z" fill="#f8a010" stroke="#1c1c1c" stroke-width=".7"/><path d="M8 8L10.6 11.6" stroke="#d82818" stroke-width="1.2"/></svg></div>
<div class="num n9l" style="left:292.6px;top:702px;width:117.4px;height:19.6px;"><svg style="left:8px;top:5.6px" width="5" height="7"><path d="M4.4 0V6.6L0 3.3Z" fill="#7a7a7a"/></svg><svg style="right:8px;top:5.6px" width="5" height="7"><path d="M0 0V6.6L4.4 3.3Z" fill="#7a7a7a"/></svg><div class="t c" style="left:0;right:2px;top:3.4px">Start: 1</div></div>
<div class="num n9r" style="left:409px;top:702px;width:112.6px;height:19.6px;"><svg style="left:8px;top:5.6px" width="5" height="7"><path d="M4.4 0V6.6L0 3.3Z" fill="#7a7a7a"/></svg><svg style="right:8px;top:5.6px" width="5" height="7"><path d="M0 0V6.6L4.4 3.3Z" fill="#7a7a7a"/></svg><div class="t c" style="left:0;right:2px;top:3.4px">End: 250</div></div>
<div class="num n9" style="left:527.6px;top:702px;width:89px;height:19.6px;"><svg style="left:8px;top:5.6px" width="5" height="7"><path d="M4.4 0V6.6L0 3.3Z" fill="#7a7a7a"/></svg><svg style="right:8px;top:5.6px" width="5" height="7"><path d="M0 0V6.6L4.4 3.3Z" fill="#7a7a7a"/></svg><div class="t c" style="left:0;right:2px;top:3.4px">0</div></div>
<div class="btn rl" style="left:634px;top:702px;width:20.8px;height:19.6px;background:linear-gradient(#a4a4a4,#8e8e8e)"><svg style="left:2px;top:1.5px" width="16" height="16" viewBox="0 0 16 16"><path d="M2 3.4H4V12.6H2Z" fill="#fff" stroke="#1c1c1c" stroke-width="1" stroke-linejoin="round"/><path d="M9.6 3.4V12.6L4.4 8Z" fill="#fff" stroke="#1c1c1c" stroke-width="1" stroke-linejoin="round"/><path d="M15 3.4V12.6L9.8 8Z" fill="#fff" stroke="#1c1c1c" stroke-width="1" stroke-linejoin="round"/></svg></div>
<div class="btn r0" style="left:653.8px;top:702px;width:20.8px;height:19.6px;background:linear-gradient(#a4a4a4,#8e8e8e)"><svg style="left:2px;top:1.5px" width="16" height="16" viewBox="0 0 16 16"><path d="M8.6 3.4V12.6L2.6 8Z" fill="#fff" stroke="#1c1c1c" stroke-width="1" stroke-linejoin="round"/><path d="M14.8 3.4V12.6L8.8 8Z" fill="#fff" stroke="#1c1c1c" stroke-width="1" stroke-linejoin="round"/></svg></div>
<div class="btn r0" style="left:673.6px;top:702px;width:20.8px;height:19.6px;background:linear-gradient(#a4a4a4,#8e8e8e)"><svg style="left:2px;top:1.5px" width="16" height="16" viewBox="0 0 16 16"><path d="M13.4 1.2V14.8L2.4 8Z" fill="#fff" stroke="#1c1c1c" stroke-width="1" stroke-linejoin="round"/></svg></div>
<div class="btn r0" style="left:693.4px;top:702px;width:20.8px;height:19.6px;background:linear-gradient(#a4a4a4,#8e8e8e)"><svg style="left:2px;top:1.5px" width="16" height="16" viewBox="0 0 16 16"><path d="M3.6 1.2V14.8L14.6 8Z" fill="#fff" stroke="#1c1c1c" stroke-width="1" stroke-linejoin="round"/></svg></div>
<div class="btn r0" style="left:713.2px;top:702px;width:20.8px;height:19.6px;background:linear-gradient(#a4a4a4,#8e8e8e)"><svg style="left:2px;top:1.5px" width="16" height="16" viewBox="0 0 16 16"><path d="M2.2 3.4V12.6L8.2 8Z" fill="#fff" stroke="#1c1c1c" stroke-width="1" stroke-linejoin="round"/><path d="M8.4 3.4V12.6L14.4 8Z" fill="#fff" stroke="#1c1c1c" stroke-width="1" stroke-linejoin="round"/></svg></div>
<div class="btn rr" style="left:733px;top:702px;width:20px;height:19.6px;background:linear-gradient(#a4a4a4,#8e8e8e)"><svg style="left:2px;top:1.5px" width="16" height="16" viewBox="0 0 16 16"><path d="M2 3.4V12.6L7.2 8Z" fill="#fff" stroke="#1c1c1c" stroke-width="1" stroke-linejoin="round"/><path d="M7.4 3.4V12.6L12.6 8Z" fill="#fff" stroke="#1c1c1c" stroke-width="1" stroke-linejoin="round"/><path d="M13 3.4H15V12.6H13Z" fill="#fff" stroke="#1c1c1c" stroke-width="1" stroke-linejoin="round"/></svg></div>
<div class="menu" style="left:760px;top:702px;width:114.4px;height:19.6px;"><svg style="left:103.6px;top:3.2px" width="7" height="13" viewBox="0 0 7 13"><path d="M3.5 0L6.6 5.3H0.4Z M3.5 13L6.6 7.7H0.4Z" fill="#b0b0b0"/></svg></div>
<div class="t w" style="left:767.8px;top:706.4px;">No Sync</div>
<div class="btn r4" style="left:891.2px;top:702px;width:19.2px;height:19.6px;background:linear-gradient(#a4a4a4,#8e8e8e)"><svg style="left:0.6px;top:0.8px" width="16" height="16" viewBox="0 0 16 16"><defs><radialGradient id="grc" cx=".4" cy=".35" r=".8"><stop offset="0" stop-color="#ff8a60"/><stop offset="1" stop-color="#d82a08"/></radialGradient></defs><circle cx="8" cy="8" r="4.9" fill="url(#grc)" stroke="#6a1404" stroke-width=".8"/></svg></div>
<div class="num" style="left:917px;top:702px;width:60px;height:19.6px;border-radius:4px 0 0 4px;background:linear-gradient(#c6c6c6,#a6a6a6)"><svg style="left:3px;top:0.8px" width="20" height="17" viewBox="0 0 20 17"><circle cx="5" cy="4.2" r="3" fill="none" stroke="#5c4a10" stroke-width="2.6"/><circle cx="5" cy="4.2" r="3" fill="none" stroke="#f0dc78" stroke-width="1.4"/><path d="M5 7.4V15.4H8.2M5 12.2H7.4" stroke="#5c4a10" stroke-width="2.8" fill="none"/><path d="M5 7.4V15.4H8.2M5 12.2H7.4" stroke="#f0dc78" stroke-width="1.5" fill="none"/><path d="M9.4 12.6Q11.2 7.8 14.4 8.2Q16 3.4 19.4 4.4" fill="none" stroke="#fff" stroke-width="2.2" stroke-linecap="round"/><path d="M9.4 12.6Q11.2 7.8 14.4 8.2Q16 3.4 19.4 4.4" fill="none" stroke="#8c8c8c" stroke-width=".9" stroke-linecap="round"/></svg></div>
<div class="a" style="left:959.2px;top:53px;width:1.6px;height:672px;background:#1f1f1f;"></div>
<div class="a" style="left:960.8px;top:53.4px;width:320px;height:671.6px;background:rgba(114,114,114,.997);"></div>
<div class="a" style="left:960.8px;top:79.6px;width:320px;height:1px;background:rgba(255,255,255,.14);"></div>
<div class="menu" style="left:969.2px;top:56.2px;width:30px;height:20px;"><svg style="left:3.6px;top:1.4px" width="16" height="16" viewBox="0 0 16 16"><path d="M4.6 4.4V12.6H8M4.6 8.4H8" stroke="#a8c0e8" stroke-width="1.3" fill="none"/><rect x="1.6" y="1.4" width="7" height="3" fill="#f8a020" stroke="#7a4600" stroke-width=".7"/><path d="M2.6 2.9H7.6" stroke="#fff0c8" stroke-width=".9"/><rect x="8.2" y="6.8" width="6" height="3" fill="#f4f4f4" stroke="#4a4a4a" stroke-width=".6"/><rect x="8.2" y="11.2" width="6" height="3" fill="#f4f4f4" stroke="#4a4a4a" stroke-width=".6"/></svg><svg style="left:20px;top:2.6px" width="7" height="13" viewBox="0 0 7 13"><path d="M3.5 0L6.6 5.3H0.4Z M3.5 13L6.6 7.7H0.4Z" fill="#a4a4a4"/></svg></div>
<svg style="left:1006.6px;top:61.4px" width="11" height="11" viewBox="0 0 11 11"><circle cx="5.5" cy="5.5" r="4.3" fill="#b4b4b4" stroke="#4a4a4a" stroke-width="1"/><path d="M3 5.5H8" stroke="#3a3a3a" stroke-width="1.4"/></svg>
<div class="t " style="left:1031.2px;top:60.6px;">View</div>
<div class="t " style="left:1070.6px;top:60.6px;">Search</div>
<div class="menu" style="left:1118.2px;top:56.2px;width:119.6px;height:20px;"><svg style="left:108.4px;top:3.2px" width="7" height="13" viewBox="0 0 7 13"><path d="M3.5 0L6.6 5.3H0.4Z M3.5 13L6.6 7.7H0.4Z" fill="#b0b0b0"/></svg></div>
<div class="t w" style="left:1126.4px;top:60.6px;">All Scenes</div>
<div class="txt" style="left:1243.2px;top:56.2px;width:50px;height:20px;border-radius:4px 0 0 4px;background:linear-gradient(#bcbcbc,#a4a4a4)"><svg style="left:2px;top:0px" width="18" height="18" viewBox="0 0 18 18"><path d="M7.6 9.6L2 16.4" stroke="#5a2c08" stroke-width="3.4" stroke-linecap="round"/><path d="M7.6 9.6L2 16.4" stroke="#d8853c" stroke-width="1.9" stroke-linecap="round"/><defs><radialGradient id="gsr" cx=".4" cy=".35" r=".8"><stop offset="0" stop-color="#fff"/><stop offset=".7" stop-color="#d8c8c8"/><stop offset="1" stop-color="#b8a8a8"/></radialGradient></defs><circle cx="11" cy="6.2" r="5" fill="url(#gsr)" stroke="#3a3a3a" stroke-width="1.1"/></svg></div>
<svg style="left:1266px;top:53.4px" width="14" height="14" viewBox="0 0 14 14"><path d="M1.6 0L14 12.4M5.6 0L14 8.4M9.6 0L14 4.4" stroke="#2e2e2e" stroke-width="1.1" fill="none"/><path d="M3 0L14 11M7 0L14 7M11 0L14 3" stroke="#a0a0a0" stroke-width="1" fill="none"/></svg>
<div class="a" style="left:960.8px;top:80.6px;width:320px;height:73px;background:#757575;"></div>
<div class="a" style="left:960.8px;top:81px;width:244px;height:19.4px;background:#838b94;"></div>
<div class="a" style="left:960.8px;top:120.6px;width:320px;height:20px;background:#707070;"></div>
<div class="a" style="left:960.8px;top:100.6px;width:320px;height:20px;background:#797979;"></div>
<div class="a" style="left:960.8px;top:140.6px;width:320px;height:13px;background:#797979;"></div>
<div class="a" style="left:1205.4px;top:80.6px;width:1px;height:73px;background:rgba(0,0,0,.14);"></div>
<div class="a" style="left:1225.4px;top:80.6px;width:1px;height:73px;background:rgba(0,0,0,.14);"></div>
<div class="a" style="left:1245.4px;top:80.6px;width:1px;height:73px;background:rgba(0,0,0,.14);"></div>
<div class="a" style="left:987.2px;top:99px;width:1px;height:55px;background:#3a3a3a;"></div>
<div class="a" style="left:972px;top:90px;width:12px;height:1px;background:#3a3a3a;"></div>
<div class="a" style="left:988px;top:150.8px;width:14px;height:1px;background:#3a3a3a;"></div>
<svg style="left:962.9px;top:84.7px" width="11" height="11" viewBox="0 0 11 11"><circle cx="5.5" cy="5.5" r="4.1" fill="#f0f0f0" stroke="#1c1c1c" stroke-width=".9"/><path d="M3.2 5.5H7.8" stroke="#111" stroke-width="1"/></svg>
<svg style="left:978.6px;top:80.8px" width="20" height="20"><circle cx="10" cy="10" r="9.4" fill="#a8acb2" fill-opacity=".75"/></svg>
<svg style="left:980.6px;top:82.6px" width="16" height="16" viewBox="0 0 16 16"><defs><radialGradient id="gs" cx=".38" cy=".32" r=".8"><stop offset="0" stop-color="#fff"/><stop offset=".55" stop-color="#e4e4e4"/><stop offset="1" stop-color="#7a7a7a"/></radialGradient><linearGradient id="gc" x1="0" x2="1"><stop offset="0" stop-color="#b8d4f8"/><stop offset=".45" stop-color="#3f7fd8"/><stop offset="1" stop-color="#143c8c"/></linearGradient><radialGradient id="gy" cx=".5" cy=".5" r=".5"><stop offset="0" stop-color="#fffff0"/><stop offset=".45" stop-color="#e8e060"/><stop offset="1" stop-color="#b0a830" stop-opacity="0"/></radialGradient></defs><rect x="7.6" y="1.1" width="6.6" height="10.8" rx="2.5" fill="url(#gc)" stroke="#0e2458" stroke-width=".8"/><path d="M8.6 3.4Q8.6 2 10.8 2Q12.6 2 12.8 3.2Q11 4.4 8.6 4.2Z" fill="#f4f8ff" fill-opacity=".9"/><circle cx="5.7" cy="10.8" r="3.9" fill="url(#gs)" stroke="#151515" stroke-width=".9"/><circle cx="2.7" cy="3" r="2.6" fill="url(#gy)"/></svg>
<div class="t " style="left:1001.6px;top:86px;">Scene</div>
<svg style="left:987.7px;top:104.9px" width="11" height="11" viewBox="0 0 11 11"><circle cx="5.5" cy="5.5" r="4.1" fill="#f0f0f0" stroke="#1c1c1c" stroke-width=".9"/><path d="M3.2 5.5H7.8" stroke="#111" stroke-width="1"/><path d="M5.5 3.2V7.8" stroke="#111" stroke-width="1"/></svg>
<svg style="left:1002.4px;top:102.4px" width="17" height="17" viewBox="0 0 17 17"><g transform="rotate(12 10 10)"><rect x="4.6" y="4.2" width="11" height="11" fill="#e8dcb0" stroke="#5a5230" stroke-width=".7"/></g><g transform="rotate(5 9 9)"><rect x="3" y="2.8" width="11" height="11" fill="#f0e8c8" stroke="#5a5230" stroke-width=".7"/></g><rect x="1.2" y="1.2" width="11" height="11" fill="#f8f8f8" stroke="#2a2a2a" stroke-width=".8"/><rect x="6.6" y="2.6" width="3.6" height="6.4" rx="1.2" fill="#3a78dc" stroke="#16326e" stroke-width=".6"/><circle cx="5" cy="8.6" r="2.2" fill="#c8c8c8" stroke="#333" stroke-width=".6"/><circle cx="3.2" cy="3.4" r="1.2" fill="#f0e040"/></svg>
<div class="t " style="left:1021.6px;top:105.6px;">RenderLayers</div>
<div class="a" style="left:1100.6px;top:104px;width:1.2px;height:13.6px;background:#3c3c3c;"></div>
<svg style="left:1108.6px;top:101.4px" width="20" height="20"><circle cx="10" cy="10" r="9.4" fill="#a0a0a0" fill-opacity=".6"/></svg>
<svg style="left:1110.4px;top:102.6px" width="17" height="17" viewBox="0 0 17 17"><g transform="rotate(12 10 10)"><rect x="4.6" y="4.2" width="11" height="11" fill="#e8dcb0" stroke="#5a5230" stroke-width=".7"/></g><g transform="rotate(5 9 9)"><rect x="3" y="2.8" width="11" height="11" fill="#f0e8c8" stroke="#5a5230" stroke-width=".7"/></g><rect x="1.2" y="1.2" width="11" height="11" fill="#f8f8f8" stroke="#2a2a2a" stroke-width=".8"/><rect x="6.6" y="2.6" width="3.6" height="6.4" rx="1.2" fill="#3a78dc" stroke="#16326e" stroke-width=".6"/><circle cx="5" cy="8.6" r="2.2" fill="#c8c8c8" stroke="#333" stroke-width=".6"/><circle cx="3.2" cy="3.4" r="1.2" fill="#f0e040"/></svg>
<svg style="left:1000.6px;top:121.6px" width="20" height="20"><circle cx="10" cy="10" r="9.4" fill="#9a9ab0" fill-opacity=".55"/></svg>
<svg style="left:1002.6px;top:123.6px" width="16" height="16" viewBox="0 0 16 16"><defs><radialGradient id="gw" cx=".4" cy=".35" r=".8"><stop offset="0" stop-color="#a8d0ff"/><stop offset=".6" stop-color="#3c7cd8"/><stop offset="1" stop-color="#1c3c80"/></radialGradient></defs><circle cx="8" cy="8" r="6.8" fill="url(#gw)" stroke="#222" stroke-width=".7"/><path d="M4 4.4Q6 2.4 8.6 3.2Q9.4 4.6 7.8 5.6Q7.6 7.4 6 7.4Q5.6 9 4.4 8.2Q3 6.4 4 4.4Z" fill="#74b860"/><path d="M9 7.6Q11.4 6.6 12.6 8.4Q12.4 11.6 10.4 12.8Q8.8 11.8 9.2 10.2Q8.2 8.8 9 7.6Z" fill="#74b860"/><path d="M5.6 10.6Q7 10.4 7.2 12.2Q6.4 13.4 5.4 12.2Z" fill="#74b860"/></svg>
<div class="t " style="left:1021.6px;top:125.6px;">World</div>
<div class="a" style="left:960.8px;top:140.6px;width:319.2px;height:13px;overflow:hidden"><svg style="left:21.9px;top:4.9px" width="11" height="11" viewBox="0 0 11 11"><circle cx="5.5" cy="5.5" r="4.1" fill="#f0f0f0" stroke="#1c1c1c" stroke-width=".9"/><path d="M3.2 5.5H7.8" stroke="#111" stroke-width="1"/><path d="M5.5 3.2V7.8" stroke="#111" stroke-width="1"/></svg><svg style="left:41.4px;top:2.6px" width="17" height="16" viewBox="0 0 17 16"><g fill="#f8a030" stroke="#5a2e04" stroke-width=".8"><circle cx="5" cy="4.4" r="3.2"/><circle cx="11.6" cy="4.4" r="3.2"/><rect x="2" y="7.4" width="10.6" height="6.2" rx="1"/><path d="M12.6 9.6L16 8V13L12.6 11.4Z"/></g><circle cx="5" cy="4.4" r="1.1" fill="#5a2e04"/><circle cx="11.6" cy="4.4" r="1.1" fill="#5a2e04"/><path d="M4 13.6V15.6M10 13.6V15.6" stroke="#5a2e04" stroke-width="1.6"/></svg><div class="t " style="left:60.8px;top:5.4px;">Camera</div><div class="a" style="left:110.2px;top:4px;width:1.2px;height:13.6px;background:#3c3c3c;"></div><svg style="left:119.6px;top:1.6px" width="18" height="18" viewBox="0 0 18 18"><circle cx="9" cy="9" r="8.6" fill="#8a8a8a" fill-opacity=".55"/><g fill="#a4a4a4" stroke="#6a6a6a" stroke-width=".8"><circle cx="6" cy="5.6" r="2.8"/><circle cx="11.8" cy="5.6" r="2.8"/><rect x="3.4" y="8.2" width="9.4" height="5.6" rx="1"/><path d="M12.8 10.2L15.8 8.8V13.2L12.8 11.8Z"/></g></svg><svg style="left:142.6px;top:3.4px" width="17" height="16" viewBox="0 0 17 16"><g transform="rotate(-35 8.5 8)"><rect x="1" y="5.2" width="8.4" height="5.6" rx="2.8" fill="none" stroke="#2a2a2a" stroke-width="3"/><rect x="7.6" y="5.2" width="8.4" height="5.6" rx="2.8" fill="none" stroke="#2a2a2a" stroke-width="3"/><rect x="1" y="5.2" width="8.4" height="5.6" rx="2.8" fill="none" stroke="#e8e8e8" stroke-width="1.5"/><rect x="7.6" y="5.2" width="8.4" height="5.6" rx="2.8" fill="none" stroke="#e8e8e8" stroke-width="1.5"/></g></svg><svg style="left:248.4px;top:3.2px" width="20" height="14" viewBox="0 0 20 14"><path d="M1 8Q10 -2 19 8Q10 16 1 8Z" fill="#f8f8f8" stroke="#1c1c1c" stroke-width="1"/><circle cx="10" cy="7.6" r="3.4" fill="#2a2a2a"/><circle cx="9" cy="6.4" r="1" fill="#fff"/></svg><svg style="left:273px;top:0.2px" width="11" height="16" viewBox="0 0 11 16"><path d="M1 1V13L4 10.2L6.2 15L8.2 14L6 9.4H10Z" fill="#f8f8f8" stroke="#111" stroke-width="1"/></svg><svg style="left:289px;top:2.6px" width="15" height="14" viewBox="0 0 15 14"><path d="M1 3.6H3.4L4.4 2.2H8L9 3.6H13.6V12.6H1Z" fill="#e4e4e4" stroke="#1c1c1c" stroke-width=".9"/><circle cx="7.4" cy="8.2" r="3" fill="#2c2c2c" stroke="#d0d0d0" stroke-width=".7"/><circle cx="7.6" cy="8.4" r="1.4" fill="#b03030"/></svg></div>
<div class="sb" style="left:1265.6px;top:85.4px;width:12.4px;height:66px;"></div>
<div class="sbt" style="left:1265.6px;top:85.4px;width:12.4px;height:20px;"></div>
<svg style="left:960.8px;top:139.6px" width="14" height="14" viewBox="0 0 14 14"><path d="M0 1.6L12.4 14M0 5.6L8.4 14M0 9.6L4.4 14" stroke="#2e2e2e" stroke-width="1.1" fill="none"/><path d="M0 3L11 14M0 7L7 14M0 11L3 14" stroke="#a0a0a0" stroke-width="1" fill="none"/></svg>
<div class="a" style="left:960.8px;top:153.6px;width:320px;height:2px;background:#1f1f1f;"></div>
<div class="a" style="left:960.8px;top:155.6px;width:320px;height:26px;background:#727272;"></div>
<div class="a" style="left:960.8px;top:181px;width:320px;height:1px;background:rgba(255,255,255,.12);"></div>
<svg style="left:1266px;top:155.6px" width="14" height="14" viewBox="0 0 14 14"><path d="M1.6 0L14 12.4M5.6 0L14 8.4M9.6 0L14 4.4" stroke="#2e2e2e" stroke-width="1.1" fill="none"/><path d="M3 0L14 11M7 0L14 7M11 0L14 3" stroke="#a0a0a0" stroke-width="1" fill="none"/></svg>
<div class="menu" style="left:969.4px;top:159.2px;width:30px;height:20px;"><svg style="left:3.4px;top:1.6px" width="16" height="16" viewBox="0 0 16 16"><rect x="1" y="2" width="13.6" height="4.8" rx="1.4" fill="#f6f6f6" stroke="#2a2a2a" stroke-width=".7"/><rect x="2" y="3" width="7" height="2.8" fill="#6a6a6a"/><rect x="1" y="9" width="13.6" height="4.8" rx="1.4" fill="#f6f6f6" stroke="#2a2a2a" stroke-width=".7"/><path d="M4.4 10V12.8L2.4 11.4ZM11.2 10V12.8L13.2 11.4Z" fill="#2a2a2a"/></svg><svg style="left:20px;top:2.6px" width="7" height="13" viewBox="0 0 7 13"><path d="M3.5 0L6.6 5.3H0.4Z M3.5 13L6.6 7.7H0.4Z" fill="#a4a4a4"/></svg></div>
<div class="a" style="left:1007.4px;top:159.2px;width:241.6px;height:19.6px;border:1px solid #242424;border-radius:4px;background:linear-gradient(#565656,#484848);box-shadow:0 1px 0 rgba(255,255,255,.12)"></div>
<div class="a" style="left:1007.2px;top:159.2px;width:20.6px;height:19.6px;border:1.6px solid #4c8cea;border-radius:4px 0 0 4px;background:#3a3a3a"></div>
<svg style="left:1009.4px;top:161px" width="17" height="16" viewBox="0 0 17 16"><defs><linearGradient id="gcm2" x1="0" x2="0" y1="0" y2="1"><stop offset="0" stop-color="#fafafa"/><stop offset="1" stop-color="#a8a8a8"/></linearGradient></defs><path d="M1 4H3.6L4.8 2.4H8.6L9.8 4H16V14.4H1Z" fill="url(#gcm2)" stroke="#141414" stroke-width="1"/><rect x="1.6" y="5.2" width="13.8" height="1.8" fill="#2a2a2a"/><rect x="2.4" y="8" width="3.4" height="5.6" fill="#2a2a2a"/><circle cx="10" cy="9.8" r="3.7" fill="#242424" stroke="#e0e0e0" stroke-width=".9"/><circle cx="10.2" cy="10" r="1.9" fill="#a83030"/><circle cx="9.2" cy="9" r=".8" fill="#f4d8d8"/><rect x="3" y="3" width="1.6" height="1.2" fill="#e03020"/></svg>
<div class="a" style="left:1027px;top:160px;width:1px;height:18px;background:#2c2c2c;"></div>
<div class="a" style="left:1029.46px;top:161px;width:18px;height:17px;opacity:.78"><svg style="left:0px;top:0px" width="17" height="17" viewBox="0 0 17 17"><g transform="rotate(12 10 10)"><rect x="4.6" y="4.2" width="11" height="11" fill="#e8dcb0" stroke="#5a5230" stroke-width=".7"/></g><g transform="rotate(5 9 9)"><rect x="3" y="2.8" width="11" height="11" fill="#f0e8c8" stroke="#5a5230" stroke-width=".7"/></g><rect x="1.2" y="1.2" width="11" height="11" fill="#f8f8f8" stroke="#2a2a2a" stroke-width=".8"/><rect x="6.6" y="2.6" width="3.6" height="6.4" rx="1.2" fill="#3a78dc" stroke="#16326e" stroke-width=".6"/><circle cx="5" cy="8.6" r="2.2" fill="#c8c8c8" stroke="#333" stroke-width=".6"/><circle cx="3.2" cy="3.4" r="1.2" fill="#f0e040"/></svg></div>
<div class="a" style="left:1047px;top:160px;width:1px;height:18px;background:#2c2c2c;"></div>
<div class="a" style="left:1049.52px;top:161px;width:18px;height:17px;opacity:.78"><svg style="left:0px;top:0px" width="16" height="16" viewBox="0 0 16 16"><defs><radialGradient id="gs" cx=".38" cy=".32" r=".8"><stop offset="0" stop-color="#fff"/><stop offset=".55" stop-color="#e4e4e4"/><stop offset="1" stop-color="#7a7a7a"/></radialGradient><linearGradient id="gc" x1="0" x2="1"><stop offset="0" stop-color="#b8d4f8"/><stop offset=".45" stop-color="#3f7fd8"/><stop offset="1" stop-color="#143c8c"/></linearGradient><radialGradient id="gy" cx=".5" cy=".5" r=".5"><stop offset="0" stop-color="#fffff0"/><stop offset=".45" stop-color="#e8e060"/><stop offset="1" stop-color="#b0a830" stop-opacity="0"/></radialGradient></defs><rect x="7.6" y="1.1" width="6.6" height="10.8" rx="2.5" fill="url(#gc)" stroke="#0e2458" stroke-width=".8"/><path d="M8.6 3.4Q8.6 2 10.8 2Q12.6 2 12.8 3.2Q11 4.4 8.6 4.2Z" fill="#f4f8ff" fill-opacity=".9"/><circle cx="5.7" cy="10.8" r="3.9" fill="url(#gs)" stroke="#151515" stroke-width=".9"/><circle cx="2.7" cy="3" r="2.6" fill="url(#gy)"/></svg></div>
<div class="a" style="left:1067px;top:160px;width:1px;height:18px;background:#2c2c2c;"></div>
<div class="a" style="left:1069.58px;top:161px;width:18px;height:17px;opacity:.78"><svg style="left:0px;top:0px" width="16" height="16" viewBox="0 0 16 16"><defs><radialGradient id="gw" cx=".4" cy=".35" r=".8"><stop offset="0" stop-color="#a8d0ff"/><stop offset=".6" stop-color="#3c7cd8"/><stop offset="1" stop-color="#1c3c80"/></radialGradient></defs><circle cx="8" cy="8" r="6.8" fill="url(#gw)" stroke="#222" stroke-width=".7"/><path d="M4 4.4Q6 2.4 8.6 3.2Q9.4 4.6 7.8 5.6Q7.6 7.4 6 7.4Q5.6 9 4.4 8.2Q3 6.4 4 4.4Z" fill="#74b860"/><path d="M9 7.6Q11.4 6.6 12.6 8.4Q12.4 11.6 10.4 12.8Q8.8 11.8 9.2 10.2Q8.2 8.8 9 7.6Z" fill="#74b860"/><path d="M5.6 10.6Q7 10.4 7.2 12.2Q6.4 13.4 5.4 12.2Z" fill="#74b860"/></svg></div>
<div class="a" style="left:1087px;top:160px;width:1px;height:18px;background:#2c2c2c;"></div>
<div class="a" style="left:1089.64px;top:161px;width:18px;height:17px;opacity:.78"><svg style="left:0px;top:0px" width="16" height="16" viewBox="0 0 16 16"><path d="M1.5 4.2L8 1.4L14.5 4.2V11.8L8 15L1.5 11.8Z" fill="#e0a060" stroke="#5a3008" stroke-width=".7"/><path d="M8 6.8L14.5 4.2V11.8L8 15Z" fill="#b87a3c"/><path d="M1.5 4.2L8 6.8V15L1.5 11.8Z" fill="#d89048"/><path d="M1.5 4.2L8 6.8L14.5 4.2" stroke="#f4d4a8" stroke-width=".6" fill="none"/></svg></div>
<div class="a" style="left:1108px;top:160px;width:1px;height:18px;background:#2c2c2c;"></div>
<div class="a" style="left:1109.7px;top:161px;width:18px;height:17px;opacity:.78"><svg style="left:0px;top:0px" width="17" height="16" viewBox="0 0 17 16"><g transform="rotate(-35 8.5 8)"><rect x="1" y="5.2" width="8.4" height="5.6" rx="2.8" fill="none" stroke="#3a3a3a" stroke-width="3"/><rect x="7.6" y="5.2" width="8.4" height="5.6" rx="2.8" fill="none" stroke="#3a3a3a" stroke-width="3"/><rect x="1" y="5.2" width="8.4" height="5.6" rx="2.8" fill="none" stroke="#c8c8c8" stroke-width="1.5"/><rect x="7.6" y="5.2" width="8.4" height="5.6" rx="2.8" fill="none" stroke="#c8c8c8" stroke-width="1.5"/></g></svg></div>
<div class="a" style="left:1128px;top:160px;width:1px;height:18px;background:#2c2c2c;"></div>
<div class="a" style="left:1129.76px;top:161px;width:18px;height:17px;opacity:.78"><svg style="left:0px;top:0px" width="16" height="16" viewBox="0 0 16 16"><path d="M2.2 13.8L8.8 7.2Q7.8 4.4 10 2.6Q11.6 1.6 13.2 2.2L10.8 4.6L11.4 6.4L13.2 7L15.4 4.8Q16 6.8 14.6 8.4Q12.8 10 10.4 9L3.8 15.4Q2.8 16 2.2 15.2Q1.6 14.6 2.2 13.8Z" fill="#6c9ad8" stroke="#1c3458" stroke-width=".9"/></svg></div>
<div class="a" style="left:1148px;top:160px;width:1px;height:18px;background:#2c2c2c;"></div>
<div class="a" style="left:1149.82px;top:161px;width:18px;height:17px;opacity:.78"><svg style="left:0px;top:0px" width="16" height="16" viewBox="0 0 16 16"><path d="M2.6 3L13.4 3L8 14Z" fill="none" stroke="#1c1c1c" stroke-width="2.2"/><path d="M2.6 3L13.4 3L8 14Z" fill="none" stroke="#e8e8e8" stroke-width="1"/><g fill="#f4f4f4" stroke="#1c1c1c" stroke-width=".7"><circle cx="2.6" cy="3" r="1.7"/><circle cx="13.4" cy="3" r="1.7"/><circle cx="8" cy="14" r="1.7"/></g></svg></div>
<div class="a" style="left:1168px;top:160px;width:1px;height:18px;background:#2c2c2c;"></div>
<div class="a" style="left:1169.88px;top:161px;width:18px;height:17px;opacity:.78"><svg style="left:0px;top:0px" width="16" height="16" viewBox="0 0 16 16"><defs><radialGradient id="gmt" cx=".4" cy=".35" r=".8"><stop offset="0" stop-color="#c8c8c8"/><stop offset="1" stop-color="#5a5a5a"/></radialGradient></defs><circle cx="8" cy="8" r="6.6" fill="url(#gmt)" stroke="#2a2a2a" stroke-width=".7"/><path d="M8 8L14.6 8A6.6 6.6 0 0 1 8 14.6Z" fill="#e8a890" fill-opacity=".85"/><path d="M8 8V1.4A6.6 6.6 0 0 0 1.4 8Z" fill="#8a8a8a" fill-opacity=".6"/></svg></div>
<div class="a" style="left:1188px;top:160px;width:1px;height:18px;background:#2c2c2c;"></div>
<div class="a" style="left:1189.94px;top:161px;width:18px;height:17px;opacity:.78"><svg style="left:0px;top:0px" width="16" height="16" viewBox="0 0 16 16"><rect x="1.4" y="1.4" width="13.2" height="13.2" fill="#f4f0f0" stroke="#3a1a1a" stroke-width=".7"/><rect x="1.4" y="1.4" width="3.3" height="3.3" fill="#a02c24"/><rect x="8" y="1.4" width="3.3" height="3.3" fill="#a02c24"/><rect x="4.7" y="4.7" width="3.3" height="3.3" fill="#a02c24"/><rect x="11.3" y="4.7" width="3.3" height="3.3" fill="#a02c24"/><rect x="1.4" y="8" width="3.3" height="3.3" fill="#a02c24"/><rect x="8" y="8" width="3.3" height="3.3" fill="#a02c24"/><rect x="4.7" y="11.3" width="3.3" height="3.3" fill="#a02c24"/><rect x="11.3" y="11.3" width="3.3" height="3.3" fill="#a02c24"/></svg></div>
<div class="a" style="left:1208px;top:160px;width:1px;height:18px;background:#2c2c2c;"></div>
<div class="a" style="left:1210px;top:161px;width:18px;height:17px;opacity:.78"><svg style="left:0px;top:0px" width="17" height="17" viewBox="0 0 17 17"><path d="M4.6 0.4L5.524 3.676L8.8 4.6L5.524 5.524L4.6 8.8L3.676 5.524L0.4 4.6L3.676 3.676ZM12.4 1L13.368 4.432L16.8 5.4L13.368 6.368L12.4 9.8L11.432 6.368L8 5.4L11.432 4.432ZM5.4 8.2L6.324 11.476L9.6 12.4L6.324 13.324L5.4 16.6L4.476 13.324L1.2 12.4L4.476 11.476ZM12 9L12.792 11.808L15.6 12.6L12.792 13.392L12 16.2L11.208 13.392L8.4 12.6L11.208 11.808Z" fill="#fff8d8" stroke="#b89a40" stroke-width=".45"/></svg></div>
<div class="a" style="left:1228px;top:160px;width:1px;height:18px;background:#2c2c2c;"></div>
<div class="a" style="left:1230.06px;top:161px;width:18px;height:17px;opacity:.78"><svg style="left:0px;top:0px" width="17" height="16" viewBox="0 0 17 16"><path d="M1.6 6.6L6.4 13.6L13.4 3.6" fill="none" stroke="#1c3458" stroke-width="3.4"/><path d="M1.6 6.6L6.4 13.6L13.4 3.6" fill="none" stroke="#5a88c8" stroke-width="2"/><defs><radialGradient id="gph" cx=".4" cy=".35" r=".8"><stop offset="0" stop-color="#fff"/><stop offset="1" stop-color="#8a8a8a"/></radialGradient></defs><circle cx="13" cy="3.6" r="2.7" fill="url(#gph)" stroke="#333" stroke-width=".6"/></svg></div>
<svg style="left:970.2px;top:192.6px" width="16" height="16" viewBox="0 0 16 16"><path d="M6.4 9.6L1.2 14.8" stroke="#2a2a2a" stroke-width="2.4" stroke-linecap="round"/><path d="M6.4 9.6L1.4 14.6" stroke="#e8e8e8" stroke-width="1.1" stroke-linecap="round"/><path d="M9.6 1L15 6.4L13.4 7L11.2 6.4L8.4 10.2L8.6 12.4L7.4 13.2L2.8 8.6L3.6 7.4L5.8 7.6L9.6 4.8L9 2.6Z" fill="#e4e4e4" stroke="#2a2a2a" stroke-width=".9" stroke-linejoin="round"/></svg>
<svg style="left:992.6px;top:192.6px" width="15.4" height="15.4" viewBox="0 0 16 16"><defs><radialGradient id="gs" cx=".38" cy=".32" r=".8"><stop offset="0" stop-color="#fff"/><stop offset=".55" stop-color="#e4e4e4"/><stop offset="1" stop-color="#7a7a7a"/></radialGradient><linearGradient id="gc" x1="0" x2="1"><stop offset="0" stop-color="#b8d4f8"/><stop offset=".45" stop-color="#3f7fd8"/><stop offset="1" stop-color="#143c8c"/></linearGradient><radialGradient id="gy" cx=".5" cy=".5" r=".5"><stop offset="0" stop-color="#fffff0"/><stop offset=".45" stop-color="#e8e060"/><stop offset="1" stop-color="#b0a830" stop-opacity="0"/></radialGradient></defs><rect x="7.6" y="1.1" width="6.6" height="10.8" rx="2.5" fill="url(#gc)" stroke="#0e2458" stroke-width=".8"/><path d="M8.6 3.4Q8.6 2 10.8 2Q12.6 2 12.8 3.2Q11 4.4 8.6 4.2Z" fill="#f4f8ff" fill-opacity=".9"/><circle cx="5.7" cy="10.8" r="3.9" fill="url(#gs)" stroke="#151515" stroke-width=".9"/><circle cx="2.7" cy="3" r="2.6" fill="url(#gy)"/></svg>
<div class="t " style="left:1012.8px;top:196px;">Scene</div>
<div class="a" style="left:965px;top:218px;width:294px;height:1px;background:rgba(0,0,0,.42);"></div>
<div class="a" style="left:965px;top:219px;width:294px;height:1px;background:rgba(255,255,255,.17);"></div>
<svg style="left:973px;top:227.4px" width="9" height="9" viewBox="0 0 9 9"><path d="M0 0H8.6L4.3 8.6Z" fill="#1c1c1c"/></svg>
<div class="pt " style="left:985.6px;top:224.6px;">Render</div>
<svg style="left:1237.6px;top:221.6px" width="18" height="18" viewBox="0 0 18 18"><path d="M1.4 0L17.4 16M7.4 0L17.4 10M12.4 0L17.4 5" stroke="#5a5a5a" stroke-width="1" fill="none"/><path d="M0.4 0.6L16.6 16.8M6.4 0.6L16.6 10.8M11.4 0.6L16.6 5.8" stroke="#8e8e8e" stroke-width="1" fill="none"/></svg>
<div class="btn rl" style="left:968px;top:251.4px;width:95.8px;height:19.6px;"><svg style="left:2.4px;top:0.4px" width="18" height="17" viewBox="0 0 18 17"><defs><linearGradient id="gcam" x1="0" x2="0" y1="0" y2="1"><stop offset="0" stop-color="#f0f0f0"/><stop offset="1" stop-color="#9a9a9a"/></linearGradient></defs><path d="M1.2 5.2H4L5.2 3.6H9.4L10.6 5.2H14.8V15H1.2Z" fill="url(#gcam)" stroke="#1c1c1c" stroke-width="1"/><rect x="1.8" y="6.2" width="12.4" height="1.6" fill="#3c3c3c"/><circle cx="8.4" cy="10.6" r="3.5" fill="#2c2c2c" stroke="#d8d8d8" stroke-width=".9"/><circle cx="8.6" cy="10.8" r="1.7" fill="#b03030"/><circle cx="7.6" cy="9.8" r=".8" fill="#f0d0d0"/><path d="M14.4 .2L15.4 2.8L17.9 3.7L15.4 4.7L14.4 7.3L13.4 4.7L10.9 3.7L13.4 2.8Z" fill="#ffe050" stroke="#f8f0a0" stroke-width=".5"/></svg><div class="t c" style="left:17px;right:0;top:3.2px">Render</div></div>
<div class="btn r0" style="left:1062.8px;top:251.4px;width:96px;height:19.6px;"><svg style="left:1.6px;top:0.4px" width="18" height="17" viewBox="0 0 18 17"><g transform="rotate(-22 2.5 7.5)"><rect x="2" y="4" width="14.6" height="3.4" fill="#1c1c1c" stroke="#111" stroke-width=".6"/><path d="M4.4 4L3.2 7.4M8 4L6.8 7.4M11.6 4L10.4 7.4M15.2 4L14 7.4" stroke="#f4f4f4" stroke-width="1.7"/></g><rect x="2.6" y="7.8" width="13.4" height="8" fill="#262626" stroke="#111" stroke-width=".8"/><path d="M3.2 9.4H15.4" stroke="#e8e8e8" stroke-width="1.4" stroke-dasharray="2.2 1.4"/><path d="M4.4 12H14.4M4.4 14H14.4" stroke="#9a9a9a" stroke-width=".9"/><path d="M1 7.6Q1.8 5 2.6 7.6V10.6Q1.8 11.6 1 10.6Z" fill="#68a8f0" stroke="#1c4c9c" stroke-width=".5"/></svg><div class="t c" style="left:17px;right:0;top:3.2px">Animation</div></div>
<div class="btn rr" style="left:1157.8px;top:251.4px;width:98px;height:19.6px;"><svg style="left:4.6px;top:1.6px" width="15" height="15" viewBox="0 0 15 15"><path d="M1.2 .8V14.2L13.4 7.5Z" fill="#f8f8f8" stroke="#1c1c1c" stroke-width="1" stroke-linejoin="round"/></svg><div class="t c" style="left:17px;right:0;top:3.2px">Play</div></div>
<div class="t " style="left:976.6px;top:281px;">Display:</div>
<div class="menu r4" style="left:1067.6px;top:276.4px;width:188.4px;height:19.6px;"><div class="t w" style="left:7.2px;top:3.5px">Image Editor</div><svg style="left:177.6px;top:3px" width="7" height="13" viewBox="0 0 7 13"><path d="M3.5 0L6.6 5.3H0.4Z M3.5 13L6.6 7.7H0.4Z" fill="#b0b0b0"/></svg></div>
<div class="t " style="left:976.6px;top:306.4px;">Feature Set:</div>
<div class="menu r4" style="left:1067.6px;top:301px;width:188.4px;height:20.4px;"><div class="t w" style="left:7.2px;top:3.5px">Supported</div><svg style="left:177.6px;top:3px" width="7" height="13" viewBox="0 0 7 13"><path d="M3.5 0L6.6 5.3H0.4Z M3.5 13L6.6 7.7H0.4Z" fill="#b0b0b0"/></svg></div>
<div class="chk" style="left:971px;top:330.6px;width:13.8px;height:13.8px;"></div>
<div class="t " style="left:993.6px;top:332.2px;letter-spacing:-0.62px">Open Shading Language</div>
<div class="a" style="left:965px;top:354px;width:294px;height:1px;background:rgba(0,0,0,.42);"></div>
<div class="a" style="left:965px;top:355px;width:294px;height:1px;background:rgba(255,255,255,.17);"></div>
<svg style="left:973px;top:363.6px" width="9" height="9" viewBox="0 0 9 9"><path d="M0 0H8.6L4.3 8.6Z" fill="#1c1c1c"/></svg>
<div class="pt " style="left:985.6px;top:360.8px;">Dimensions</div>
<svg style="left:1237.6px;top:357.8px" width="18" height="18" viewBox="0 0 18 18"><path d="M1.4 0L17.4 16M7.4 0L17.4 10M12.4 0L17.4 5" stroke="#5a5a5a" stroke-width="1" fill="none"/><path d="M0.4 0.6L16.6 16.8M6.4 0.6L16.6 10.8M11.4 0.6L16.6 5.8" stroke="#8e8e8e" stroke-width="1" fill="none"/></svg>
<div class="menu rl" style="left:968px;top:387.4px;width:247.6px;height:19.6px;"><div class="t w" style="left:7.2px;top:3.5px">Render Presets</div><svg style="left:236.8px;top:3px" width="7" height="13" viewBox="0 0 7 13"><path d="M3.5 0L6.6 5.3H0.4Z M3.5 13L6.6 7.7H0.4Z" fill="#b0b0b0"/></svg></div>
<div class="btn r0" style="left:1214.6px;top:387.4px;width:21.2px;height:19.6px;border-left:0"><svg style="left:2.6px;top:1.8px" width="14" height="14" viewBox="0 0 14 14"><path d="M7 1.4V12.6M1.4 7H12.6" stroke="#3c3c3c" stroke-width="3.1" stroke-linecap="butt"/><path d="M7 2V12M2 7H12" stroke="#fff" stroke-width="2"/></svg></div>
<div class="btn rr" style="left:1234.8px;top:387.4px;width:21px;height:19.6px;"><svg style="left:2.6px;top:1.8px" width="14" height="14" viewBox="0 0 14 14"><path d="M1.4 7H12.6" stroke="#3c3c3c" stroke-width="3.1" stroke-linecap="butt"/><path d="M2 7H12" stroke="#fff" stroke-width="2"/></svg></div>
<div class="t " style="left:976.6px;top:418px;">Resolution:</div>
<div class="t " style="left:1124.6px;top:418px;">Frame Range:</div>
<div class="num n9t" style="left:968px;top:432px;width:140px;height:21px;"><svg style="left:8px;top:5.6px" width="5" height="7"><path d="M4.4 0V6.6L0 3.3Z" fill="#7a7a7a"/></svg><svg style="right:8px;top:5.6px" width="5" height="7"><path d="M0 0V6.6L4.4 3.3Z" fill="#7a7a7a"/></svg><div class="t c" style="left:0;right:2px;top:5px">X: 3840</div></div>
<div class="num r0" style="left:968px;top:452px;width:140px;height:21px;"><svg style="left:8px;top:5.6px" width="5" height="7"><path d="M4.4 0V6.6L0 3.3Z" fill="#7a7a7a"/></svg><svg style="right:8px;top:5.6px" width="5" height="7"><path d="M0 0V6.6L4.4 3.3Z" fill="#7a7a7a"/></svg><div class="t c" style="left:0;right:2px;top:5px">Y: 2160</div></div>
<div class="sld n9b" style="left:968px;top:472px;width:140px;height:21px;"><div class="t c" style="left:0;right:2px;top:4.8px">100%</div></div>
<div class="num n9t" style="left:1116px;top:432px;width:140px;height:21px;"><svg style="left:8px;top:5.6px" width="5" height="7"><path d="M4.4 0V6.6L0 3.3Z" fill="#7a7a7a"/></svg><svg style="right:8px;top:5.6px" width="5" height="7"><path d="M0 0V6.6L4.4 3.3Z" fill="#7a7a7a"/></svg><div class="t c" style="left:0;right:2px;top:5px">Start Frame: 1</div></div>
<div class="num r0" style="left:1116px;top:452px;width:140px;height:21px;"><svg style="left:8px;top:5.6px" width="5" height="7"><path d="M4.4 0V6.6L0 3.3Z" fill="#7a7a7a"/></svg><svg style="right:8px;top:5.6px" width="5" height="7"><path d="M0 0V6.6L4.4 3.3Z" fill="#7a7a7a"/></svg><div class="t c" style="left:0;right:2px;top:5px">End Frame: 250</div></div>
<div class="num n9b" style="left:1116px;top:472px;width:140px;height:21px;"><svg style="left:8px;top:5.6px" width="5" height="7"><path d="M4.4 0V6.6L0 3.3Z" fill="#7a7a7a"/></svg><svg style="right:8px;top:5.6px" width="5" height="7"><path d="M0 0V6.6L4.4 3.3Z" fill="#7a7a7a"/></svg><div class="t c" style="left:0;right:2px;top:5px">Frame Step: 1</div></div>
<div class="t " style="left:976.6px;top:498.4px;">Aspect Ratio:</div>
<div class="t " style="left:1124.6px;top:498.4px;">Frame Rate:</div>
<div class="num n9t" style="left:968px;top:513px;width:140px;height:21px;"><svg style="left:8px;top:5.6px" width="5" height="7"><path d="M4.4 0V6.6L0 3.3Z" fill="#7a7a7a"/></svg><svg style="right:8px;top:5.6px" width="5" height="7"><path d="M0 0V6.6L4.4 3.3Z" fill="#7a7a7a"/></svg><div class="t c" style="left:0;right:2px;top:5px">X: 1.000</div></div>
<div class="num n9b" style="left:968px;top:533px;width:140px;height:21px;"><svg style="left:8px;top:5.6px" width="5" height="7"><path d="M4.4 0V6.6L0 3.3Z" fill="#7a7a7a"/></svg><svg style="right:8px;top:5.6px" width="5" height="7"><path d="M0 0V6.6L4.4 3.3Z" fill="#7a7a7a"/></svg><div class="t c" style="left:0;right:2px;top:5px">Y: 1.000</div></div>
<div class="menu r4" style="left:1116px;top:513px;width:140px;height:20px;"><div class="t w" style="left:7.2px;top:3.5px">24 fps</div><svg style="left:129.2px;top:3px" width="7" height="13" viewBox="0 0 7 13"><path d="M3.5 0L6.6 5.3H0.4Z M3.5 13L6.6 7.7H0.4Z" fill="#b0b0b0"/></svg></div>
<div class="t " style="left:1124.6px;top:539px;">Time Remapping:</div>
<div class="num n9l" style="left:1116px;top:554px;width:69px;height:20.4px;"><svg style="left:4.6px;top:5.6px" width="5" height="7"><path d="M4.4 0V6.6L0 3.3Z" fill="#7a7a7a"/></svg><svg style="right:4.6px;top:5.6px" width="5" height="7"><path d="M0 0V6.6L4.4 3.3Z" fill="#7a7a7a"/></svg><div class="t c" style="left:0;right:2px;top:4.4px">Old: 100</div></div>
<div class="num n9r" style="left:1184px;top:554px;width:72px;height:20.4px;"><svg style="left:4.6px;top:5.6px" width="5" height="7"><path d="M4.4 0V6.6L0 3.3Z" fill="#7a7a7a"/></svg><svg style="right:4.6px;top:5.6px" width="5" height="7"><path d="M0 0V6.6L4.4 3.3Z" fill="#7a7a7a"/></svg><div class="t c" style="left:0;right:2px;top:4.4px">Ne: 100</div></div>
<div class="chk" style="left:971px;top:559.2px;width:13.8px;height:13.8px;"></div>
<div class="t " style="left:993.6px;top:561.2px;">Border</div>
<div class="chk" style="left:1044px;top:559.2px;width:13.8px;height:13.8px;opacity:.45"></div>
<div class="t " style="left:1066.8px;top:561.2px;color:#4c4c4c">Crop</div>
<div class="a" style="left:965px;top:583px;width:294px;height:1px;background:rgba(0,0,0,.42);"></div>
<div class="a" style="left:965px;top:584px;width:294px;height:1px;background:rgba(255,255,255,.17);"></div>
<svg style="left:973.4px;top:592.2px" width="9" height="9" viewBox="0 0 9 9"><path d="M0 0V8.6L8.6 4.3Z" fill="#1c1c1c"/></svg>
<div class="chk" style="left:985.2px;top:589.6px;width:13.8px;height:13.8px;"></div>
<div class="pt " style="left:1005.4px;top:589.8px;">Stamp</div>
<svg style="left:1237.6px;top:586.8px" width="18" height="18" viewBox="0 0 18 18"><path d="M1.4 0L17.4 16M7.4 0L17.4 10M12.4 0L17.4 5" stroke="#5a5a5a" stroke-width="1" fill="none"/><path d="M0.4 0.6L16.6 16.8M6.4 0.6L16.6 10.8M11.4 0.6L16.6 5.8" stroke="#8e8e8e" stroke-width="1" fill="none"/></svg>
<div class="a" style="left:965px;top:607px;width:294px;height:1px;background:rgba(0,0,0,.42);"></div>
<div class="a" style="left:965px;top:608px;width:294px;height:1px;background:rgba(255,255,255,.17);"></div>
<svg style="left:973px;top:616.8px" width="9" height="9" viewBox="0 0 9 9"><path d="M0 0H8.6L4.3 8.6Z" fill="#1c1c1c"/></svg>
<div class="pt " style="left:985.6px;top:614px;">Output</div>
<svg style="left:1237.6px;top:611px" width="18" height="18" viewBox="0 0 18 18"><path d="M1.4 0L17.4 16M7.4 0L17.4 10M12.4 0L17.4 5" stroke="#5a5a5a" stroke-width="1" fill="none"/><path d="M0.4 0.6L16.6 16.8M6.4 0.6L16.6 10.8M11.4 0.6L16.6 5.8" stroke="#8e8e8e" stroke-width="1" fill="none"/></svg>
<div class="txt rl" style="left:968px;top:640.6px;width:267.8px;height:19.6px;background:linear-gradient(#a0a0a0,#b8b8b8)"><div class="t" style="left:7px;top:4.2px">/tmp/</div></div>
<div class="btn rr" style="left:1234.8px;top:640.6px;width:21px;height:19.6px;background:linear-gradient(#b4b4b4,#9c9c9c)"><svg style="left:1.4px;top:1.2px" width="17" height="16" viewBox="0 0 17 16"><rect x="6.6" y="1.6" width="7" height="8" fill="#f8f8f8" stroke="#4a4a4a" stroke-width=".7"/><path d="M8 3.6H12.2M8 5.4H12.2" stroke="#8a8a8a" stroke-width=".7"/><path d="M1.2 4.2H5.4L6.6 5.8H15.4V14.4H1.2Z" fill="#f0d888" stroke="#6a5410" stroke-width=".8"/><path d="M1.8 7.2H14.8" stroke="#fff4c8" stroke-width=".8"/></svg></div>
<div class="chk" style="left:971px;top:669.2px;width:13.8px;height:13.8px;"><svg style="left:-1.4px;top:-4.6px" width="16" height="16" viewBox="0 0 16 16"><path d="M3.4 8.2L6.4 11.8L12.6 3" fill="none" stroke="#222" stroke-width="3.2"/><path d="M3.4 8.2L6.4 11.8L12.6 3" fill="none" stroke="#fff" stroke-width="1.7"/></svg></div>
<div class="t w" style="left:993.6px;top:671.4px;">Overwrite</div>
<div class="chk" style="left:1118.8px;top:669.2px;width:13.8px;height:13.8px;"><svg style="left:-1.4px;top:-4.6px" width="16" height="16" viewBox="0 0 16 16"><path d="M3.4 8.2L6.4 11.8L12.6 3" fill="none" stroke="#222" stroke-width="3.2"/><path d="M3.4 8.2L6.4 11.8L12.6 3" fill="none" stroke="#fff" stroke-width="1.7"/></svg></div>
<div class="t w" style="left:1141px;top:671.4px;">File Extensions</div>
<div class="chk" style="left:971px;top:691.4px;width:13.8px;height:13.8px;"></div>
<div class="t " style="left:993.6px;top:693.2px;">Placeholders</div>
<div class="a" style="left:960.8px;top:712px;width:300px;height:13px;overflow:hidden"><div class="menu r4" style="left:7.2px;top:1px;width:140px;height:20px;"><svg style="left:5.4px;top:0.6px" width="15" height="17" viewBox="0 0 15 17"><path d="M1.4 1H10L13.6 4.6V16H1.4Z" fill="#fafafa" stroke="#2a2a2a" stroke-width=".8"/><path d="M10 1V4.6H13.6" fill="#d0d0d0" stroke="#2a2a2a" stroke-width=".6"/><rect x="2.6" y="3.4" width="9.8" height="8" fill="#f0a8a0"/><circle cx="8.6" cy="5.6" r="1.1" fill="#fff"/><path d="M2.6 9L5.4 7L8 9L10 8L12.4 9.4V11.4H2.6Z" fill="#5a2438"/></svg><div class="t w" style="left:24px;top:4.2px">PNG</div><svg style="left:128.4px;top:3px" width="7" height="13" viewBox="0 0 7 13"><path d="M3.5 0L6.6 5.3H0.4Z M3.5 13L6.6 7.7H0.4Z" fill="#b0b0b0"/></svg></div><div class="menu rl" style="left:155.2px;top:1px;width:46px;height:20px;"><div class="t w c" style="left:0;right:0;top:4.2px">BW</div></div><div class="menu r0" style="left:200.2px;top:1px;width:48px;height:20px;"><div class="t w c" style="left:0;right:0;top:4.2px">RGB</div></div><div class="menu rr" style="left:247.2px;top:1px;width:47.8px;height:20px;background:linear-gradient(#5a94e4,#4a80cc)"><div class="t c" style="left:0;right:0;top:4.2px">RGBA</div></div></div>
<svg style="left:960.8px;top:711.4px" width="14" height="14" viewBox="0 0 14 14"><path d="M0 1.6L12.4 14M0 5.6L8.4 14M0 9.6L4.4 14" stroke="#2e2e2e" stroke-width="1.1" fill="none"/><path d="M0 3L11 14M0 7L7 14M0 11L3 14" stroke="#a0a0a0" stroke-width="1" fill="none"/></svg>
<div class="sb" style="left:1265.4px;top:188.4px;width:12.4px;height:533px;"></div>
<div class="sbt" style="left:1265.4px;top:188.4px;width:12.4px;height:299.4px;"></div>
<div class="a" style="left:0px;top:725px;width:1280px;height:75px;background:#000;"></div>
<svg style="left:409px;top:753px" width="30" height="30"><circle cx="15" cy="15" r="13.9" fill="#0e0e0e"/><circle cx="15" cy="15" r="6" fill="#000"/><circle cx="15" cy="15" r="4.2" fill="#2a2a2a"/></svg>
<svg style="left:625px;top:753px" width="30" height="30"><circle cx="15" cy="15" r="13.9" fill="#0e0e0e"/><circle cx="15" cy="15" r="6" fill="#000"/><circle cx="15" cy="15" r="4.2" fill="#2a2a2a"/></svg>
<svg style="left:841px;top:753px" width="30" height="30"><circle cx="15" cy="15" r="13.9" fill="#0e0e0e"/><circle cx="15" cy="15" r="6" fill="#000"/><circle cx="15" cy="15" r="4.2" fill="#2a2a2a"/></svg>
</div>
</body></html>
